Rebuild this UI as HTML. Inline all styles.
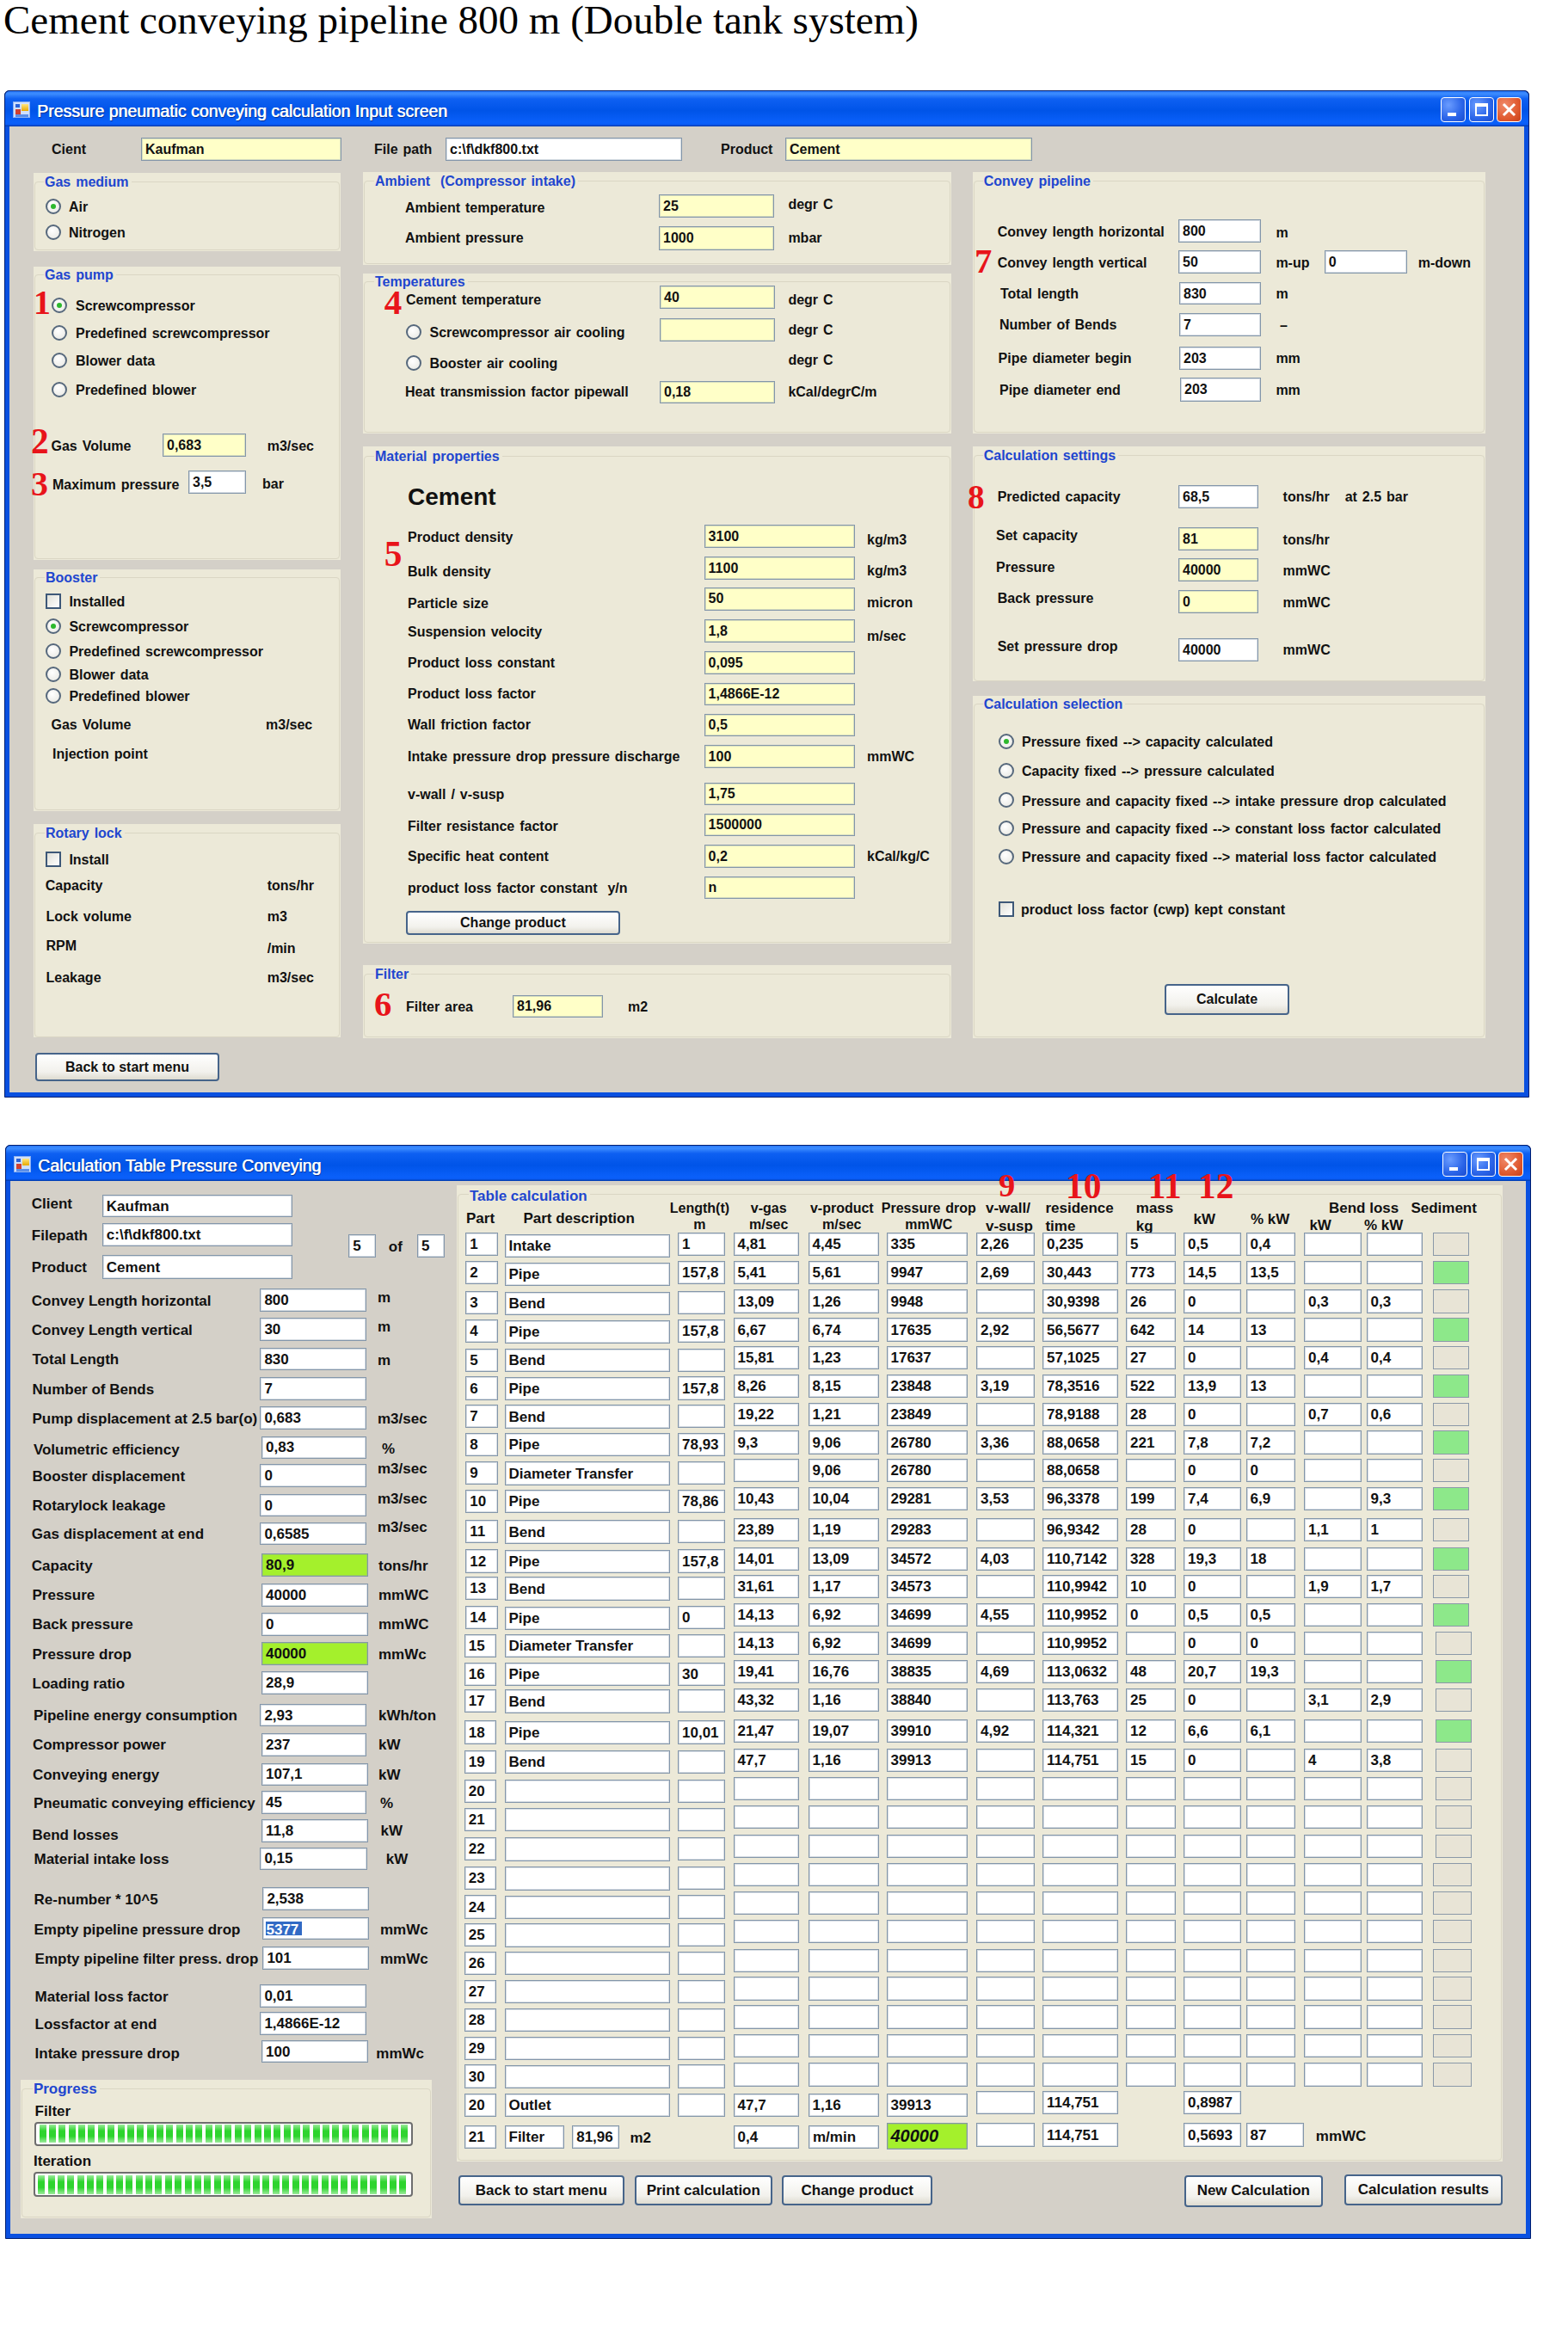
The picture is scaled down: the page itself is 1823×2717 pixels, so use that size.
<!DOCTYPE html><html><head><meta charset="utf-8"><style>
*{margin:0;padding:0;box-sizing:border-box}
html,body{width:1823px;height:2717px;background:#fff;overflow:hidden;position:relative}
body{font-family:"Liberation Sans",sans-serif}
.l{position:absolute;font-weight:bold;font-size:16px;line-height:20px;white-space:pre;color:#111;word-spacing:1.5px}
.t{position:absolute;border:1px solid #8396AA;box-shadow:inset 0 0 0 1px rgba(140,158,176,0.35)}
.t span{position:absolute;left:4px;font-weight:bold;font-size:16px;line-height:20px;white-space:nowrap;color:#111}
.g{position:absolute;background:#ECE9D8}
.gb{position:absolute;border:1px solid #DAD6C4;border-radius:4px}
.r{position:absolute;width:18px;height:18px;border-radius:50%;border:2px solid #56687C;background:radial-gradient(circle at 40% 35%,#fff,#e6e6e0)}
.r i{position:absolute;left:4px;top:4px;width:6px;height:6px;border-radius:50%;background:#2DB82D}
.c{position:absolute;border:2px solid #3D5878;background:linear-gradient(135deg,#e0e0d8,#fff)}
.b{position:absolute;border:2px solid #46648A;border-radius:4px;background:linear-gradient(#fff,#f2f1ec 70%,#dedbd0);font-weight:bold;font-size:16px;text-align:center;white-space:nowrap;color:#111}
.n{position:absolute;font-family:"Liberation Serif",serif;font-weight:bold;color:#E8141A;white-space:nowrap}
.w{position:absolute;background:#0A50E0;border:1px solid #001E70;border-radius:6px 6px 0 0}
.tbar{position:absolute;border-radius:6px 6px 0 0;border:1px solid #001E70;border-bottom:none;background:linear-gradient(#2A78F8 0,#3D8DFF 3px,#0E60F2 9px,#0054E8 55%,#0A60FA 88%,#0A5CF5 94%,#0038A8 100%)}
.cont{position:absolute;background:#D4D0C8}
.ico{position:absolute;width:20px;height:19px;border:1px solid #8cb0f0;background:#cfe0ff}
.ico b,.wb b{position:absolute;display:block}
.ttl{position:absolute;font-weight:normal;font-size:19.5px;line-height:24px;color:#fff;white-space:nowrap;text-shadow:0.6px 0 0 #fff,1px 1px 1px #0a2a80}
.wb{position:absolute;width:29px;height:29px;border:1px solid #fff;border-radius:4px;background:radial-gradient(circle at 30% 30%,#6a9cff,#2a64e8 60%,#1a4cd0)}
.wb.cl{background:radial-gradient(circle at 30% 30%,#f08a6a,#e05a30 60%,#c8401a)}
.pb{position:absolute;border:2px solid #6E6E6E;border-radius:4px;background:#fff}
.pbi{position:absolute}
.pbi b{position:absolute;top:3.5px;bottom:3.5px;width:8px;background:linear-gradient(#9CEB9C,#2ED42E 35%,#2ED42E 65%,#9CEB9C)}
.title{position:absolute;font-family:"Liberation Serif",serif;font-size:47px;line-height:54px;white-space:nowrap;color:#000}
</style></head><body><div class="title" style="left:4px;top:-4px">Cement conveying pipeline 800 m (Double tank system)</div>
<div class="w" style="left:5px;top:105px;width:1773px;height:1171px"></div>
<div class="tbar" style="left:5px;top:105px;width:1773px;height:42px"></div>
<div class="cont" style="left:11px;top:147px;width:1761px;height:1123px"></div>
<div class="ico" style="left:15px;top:118px"><b style="left:2px;top:2px;width:5px;height:4px;background:#2a62d8"></b><b style="left:9px;top:2px;width:8px;height:8px;background:linear-gradient(#ffe680,#e8a800)"></b><b style="left:2px;top:8px;width:6px;height:6px;background:#d04030"></b><b style="left:2px;top:14px;width:15px;height:3px;background:#5a8ee8"></b></div>
<div class="ttl" style="left:43px;top:117.0px">Pressure pneumatic conveying calculation Input screen</div>
<div class="wb" style="left:1675px;top:113px"><b style="left:7px;top:17px;width:10px;height:4px;background:#fff"></b></div>
<div class="wb" style="left:1708px;top:113px"><b style="left:6px;top:6px;width:13px;height:12px;border:2px solid #fff;border-top-width:4px;box-sizing:border-box;width:15px;height:15px"></b></div>
<div class="wb cl" style="left:1740px;top:113px"><svg width="27" height="27" style="position:absolute;left:0;top:0"><path d="M8 8L19 19M19 8L8 19" stroke="#fff" stroke-width="3" stroke-linecap="square"/></svg></div>
<div class="l" style="left:60.0px;top:164.1px;">Cient</div>
<div class="t" style="left:164.0px;top:160.0px;width:233.0px;height:27.0px;background:#FFFFC8;"><span style="top:2.8px;">Kaufman</span></div>
<div class="l" style="left:435.0px;top:164.1px;">File path</div>
<div class="t" style="left:518.0px;top:160.0px;width:275.0px;height:27.0px;background:#fff;"><span style="top:2.8px;">c:\f\dkf800.txt</span></div>
<div class="l" style="left:838.0px;top:164.1px;">Product</div>
<div class="t" style="left:913.0px;top:160.0px;width:287.0px;height:27.0px;background:#FFFFC8;"><span style="top:2.8px;">Cement</span></div>
<div class="g" style="left:39.0px;top:201.0px;width:357.0px;height:91.0px"></div>
<div class="gb" style="left:40.0px;top:211.0px;width:355.0px;height:80.0px"></div>
<div class="l" style="left:51.0px;top:202.1px;color:#2146CF;background:#ECE9D8;padding:0 3px 0 1px;">Gas medium</div>
<div class="r" style="left:53.0px;top:230.5px"><i></i></div>
<div class="l" style="left:80.0px;top:230.6px;">Air</div>
<div class="r" style="left:53.0px;top:260.7px"></div>
<div class="l" style="left:80.0px;top:260.8px;">Nitrogen</div>
<div class="g" style="left:39.0px;top:310.0px;width:357.0px;height:341.0px"></div>
<div class="gb" style="left:40.0px;top:319.0px;width:355.0px;height:331.0px"></div>
<div class="l" style="left:51.0px;top:310.1px;color:#2146CF;background:#ECE9D8;padding:0 3px 0 1px;">Gas pump</div>
<div class="n" style="left:39.0px;top:332.4px;font-size:39.9px;line-height:39.9px">1</div>
<div class="r" style="left:60.0px;top:345.7px"><i></i></div>
<div class="l" style="left:88.0px;top:345.8px;">Screwcompressor</div>
<div class="r" style="left:60.0px;top:378.0px"></div>
<div class="l" style="left:88.0px;top:378.1px;">Predefined screwcompressor</div>
<div class="r" style="left:60.0px;top:410.0px"></div>
<div class="l" style="left:88.0px;top:410.1px;">Blower data</div>
<div class="r" style="left:60.0px;top:444.0px"></div>
<div class="l" style="left:88.0px;top:444.1px;">Predefined blower</div>
<div class="n" style="left:36.0px;top:493.2px;font-size:41.4px;line-height:41.4px">2</div>
<div class="l" style="left:59.5px;top:508.6px;">Gas Volume</div>
<div class="t" style="left:189.0px;top:504.0px;width:97.0px;height:27.0px;background:#FFFFC8;"><span style="top:2.8px;">0,683</span></div>
<div class="l" style="left:310.7px;top:508.6px;">m3/sec</div>
<div class="n" style="left:36.0px;top:543.4px;font-size:39.9px;line-height:39.9px">3</div>
<div class="l" style="left:61.0px;top:554.1px;">Maximum pressure</div>
<div class="t" style="left:219.0px;top:547.0px;width:67.0px;height:27.0px;background:#fff;"><span style="top:2.8px;">3,5</span></div>
<div class="l" style="left:305.0px;top:553.1px;">bar</div>
<div class="g" style="left:39.0px;top:661.6px;width:357.0px;height:281.4px"></div>
<div class="gb" style="left:40.0px;top:671.0px;width:355.0px;height:271.0px"></div>
<div class="l" style="left:52.0px;top:662.1px;color:#2146CF;background:#ECE9D8;padding:0 3px 0 1px;">Booster</div>
<div class="c" style="left:53.0px;top:690.0px;width:18px;height:18px"></div>
<div class="l" style="left:80.4px;top:690.1px;">Installed</div>
<div class="r" style="left:53.0px;top:719.0px"><i></i></div>
<div class="l" style="left:80.4px;top:719.1px;">Screwcompressor</div>
<div class="r" style="left:53.0px;top:748.0px"></div>
<div class="l" style="left:80.4px;top:748.1px;">Predefined screwcompressor</div>
<div class="r" style="left:53.0px;top:775.0px"></div>
<div class="l" style="left:80.4px;top:775.1px;">Blower data</div>
<div class="r" style="left:53.0px;top:800.0px"></div>
<div class="l" style="left:80.4px;top:800.1px;">Predefined blower</div>
<div class="l" style="left:59.5px;top:833.1px;">Gas Volume</div>
<div class="l" style="left:309.0px;top:833.1px;">m3/sec</div>
<div class="l" style="left:61.0px;top:866.5px;">Injection point</div>
<div class="g" style="left:39.0px;top:957.6px;width:357.0px;height:248.9px"></div>
<div class="gb" style="left:40.0px;top:967.5px;width:355.0px;height:238.0px"></div>
<div class="l" style="left:52.0px;top:958.6px;color:#2146CF;background:#ECE9D8;padding:0 3px 0 1px;">Rotary lock</div>
<div class="c" style="left:53.0px;top:990.0px;width:18px;height:18px"></div>
<div class="l" style="left:80.4px;top:990.1px;">Install</div>
<div class="l" style="left:52.8px;top:1020.1px;">Capacity</div>
<div class="l" style="left:310.7px;top:1020.1px;">tons/hr</div>
<div class="l" style="left:53.5px;top:1056.1px;">Lock volume</div>
<div class="l" style="left:310.7px;top:1056.1px;">m3</div>
<div class="l" style="left:53.5px;top:1089.6px;">RPM</div>
<div class="l" style="left:310.7px;top:1093.1px;">/min</div>
<div class="l" style="left:53.5px;top:1126.6px;">Leakage</div>
<div class="l" style="left:310.7px;top:1126.6px;">m3/sec</div>
<div class="b" style="left:40.7px;top:1224.0px;width:214.6px;height:33.4px;line-height:29.4px;">Back to start menu</div>
<div class="g" style="left:421.5px;top:199.6px;width:684.1px;height:108.8px"></div>
<div class="gb" style="left:422.5px;top:209.7px;width:682.1px;height:97.7px"></div>
<div class="l" style="left:435.0px;top:200.8px;color:#2146CF;background:#ECE9D8;padding:0 3px 0 1px;">Ambient  (Compressor intake)</div>
<div class="l" style="left:471.0px;top:231.5px;">Ambient temperature</div>
<div class="t" style="left:766.0px;top:225.8px;width:134.0px;height:27.5px;background:#FFFFC8;"><span style="top:3.1px;">25</span></div>
<div class="l" style="left:916.4px;top:228.1px;">degr C</div>
<div class="l" style="left:471.0px;top:267.4px;">Ambient pressure</div>
<div class="t" style="left:766.0px;top:263.4px;width:134.0px;height:27.6px;background:#FFFFC8;"><span style="top:3.1px;">1000</span></div>
<div class="l" style="left:916.4px;top:267.1px;">mbar</div>
<div class="g" style="left:421.5px;top:317.6px;width:684.1px;height:186.9px"></div>
<div class="gb" style="left:422.5px;top:326.8px;width:682.1px;height:176.7px"></div>
<div class="l" style="left:435.0px;top:317.9px;color:#2146CF;background:#ECE9D8;padding:0 3px 0 1px;">Temperatures</div>
<div class="n" style="left:446.7px;top:331.2px;font-size:41.1px;line-height:41.1px">4</div>
<div class="l" style="left:472.0px;top:339.4px;">Cement temperature</div>
<div class="t" style="left:767.0px;top:332.3px;width:134.0px;height:26.7px;background:#FFFFC8;"><span style="top:2.6px;">40</span></div>
<div class="l" style="left:916.4px;top:339.1px;">degr C</div>
<div class="r" style="left:472.0px;top:376.5px"></div>
<div class="l" style="left:499.5px;top:376.6px;">Screwcompressor air cooling</div>
<div class="t" style="left:767.0px;top:369.5px;width:134.0px;height:27.0px;background:#FFFFC8;"></div>
<div class="l" style="left:916.4px;top:374.1px;">degr C</div>
<div class="r" style="left:472.0px;top:412.8px"></div>
<div class="l" style="left:499.5px;top:412.9px;">Booster air cooling</div>
<div class="l" style="left:916.4px;top:408.8px;">degr C</div>
<div class="l" style="left:471.0px;top:446.4px;">Heat transmission factor pipewall</div>
<div class="t" style="left:767.0px;top:442.5px;width:134.0px;height:26.5px;background:#FFFFC8;"><span style="top:2.6px;">0,18</span></div>
<div class="l" style="left:916.4px;top:446.4px;">kCal/degrC/m</div>
<div class="g" style="left:421.5px;top:519.0px;width:684.1px;height:578.0px"></div>
<div class="gb" style="left:422.5px;top:530.0px;width:682.1px;height:566.0px"></div>
<div class="l" style="left:435.0px;top:521.1px;color:#2146CF;background:#ECE9D8;padding:0 3px 0 1px;">Material properties</div>
<div class="l" style="left:474.0px;top:559.6px;font-size:28px;line-height:35.0px;">Cement</div>
<div class="n" style="left:446.7px;top:624.2px;font-size:41.4px;line-height:41.4px">5</div>
<div class="l" style="left:474.0px;top:615.1px;">Product density</div>
<div class="t" style="left:818.6px;top:610.0px;width:175.9px;height:26.8px;background:#FFFFC8;"><span style="top:2.7px;">3100</span></div>
<div class="l" style="left:1008.0px;top:618.1px;">kg/m3</div>
<div class="l" style="left:474.0px;top:655.1px;">Bulk density</div>
<div class="t" style="left:818.6px;top:647.0px;width:175.9px;height:26.5px;background:#FFFFC8;"><span style="top:2.6px;">1100</span></div>
<div class="l" style="left:1008.0px;top:654.1px;">kg/m3</div>
<div class="l" style="left:474.0px;top:691.7px;">Particle size</div>
<div class="t" style="left:818.6px;top:682.7px;width:175.9px;height:27.1px;background:#FFFFC8;"><span style="top:2.8px;">50</span></div>
<div class="l" style="left:1008.0px;top:691.1px;">micron</div>
<div class="l" style="left:474.0px;top:725.1px;">Suspension velocity</div>
<div class="t" style="left:818.6px;top:720.4px;width:175.9px;height:26.6px;background:#FFFFC8;"><span style="top:2.6px;">1,8</span></div>
<div class="l" style="left:1008.0px;top:729.8px;">m/sec</div>
<div class="l" style="left:474.0px;top:761.1px;">Product loss constant</div>
<div class="t" style="left:818.6px;top:757.0px;width:175.9px;height:26.7px;background:#FFFFC8;"><span style="top:2.7px;">0,095</span></div>
<div class="l" style="left:474.0px;top:797.1px;">Product loss factor</div>
<div class="t" style="left:818.6px;top:793.8px;width:175.9px;height:26.7px;background:#FFFFC8;"><span style="top:2.7px;">1,4866E-12</span></div>
<div class="l" style="left:474.0px;top:833.1px;">Wall friction factor</div>
<div class="t" style="left:818.6px;top:829.7px;width:175.9px;height:26.8px;background:#FFFFC8;"><span style="top:2.7px;">0,5</span></div>
<div class="l" style="left:474.0px;top:870.1px;">Intake pressure drop pressure discharge</div>
<div class="t" style="left:818.6px;top:866.0px;width:175.9px;height:26.8px;background:#FFFFC8;"><span style="top:2.7px;">100</span></div>
<div class="l" style="left:1008.0px;top:870.1px;">mmWC</div>
<div class="l" style="left:474.0px;top:913.7px;">v-wall / v-susp</div>
<div class="t" style="left:818.6px;top:909.8px;width:175.9px;height:26.6px;background:#FFFFC8;"><span style="top:2.6px;">1,75</span></div>
<div class="l" style="left:474.0px;top:950.5px;">Filter resistance factor</div>
<div class="t" style="left:818.6px;top:945.6px;width:175.9px;height:26.4px;background:#FFFFC8;"><span style="top:2.5px;">1500000</span></div>
<div class="l" style="left:474.0px;top:986.1px;">Specific heat content</div>
<div class="t" style="left:818.6px;top:982.0px;width:175.9px;height:27.0px;background:#FFFFC8;"><span style="top:2.8px;">0,2</span></div>
<div class="l" style="left:1008.0px;top:986.1px;">kCal/kg/C</div>
<div class="l" style="left:474.0px;top:1022.6px;">product loss factor constant  y/n</div>
<div class="t" style="left:818.6px;top:1019.0px;width:175.9px;height:26.0px;background:#FFFFC8;"><span style="top:2.3px;">n</span></div>
<div class="b" style="left:472.0px;top:1059.0px;width:248.8px;height:28.0px;line-height:24.0px;">Change product</div>
<div class="g" style="left:421.5px;top:1122.4px;width:684.1px;height:84.6px"></div>
<div class="gb" style="left:422.5px;top:1131.5px;width:682.1px;height:74.5px"></div>
<div class="l" style="left:435.0px;top:1122.6px;color:#2146CF;background:#ECE9D8;padding:0 3px 0 1px;">Filter</div>
<div class="n" style="left:435.0px;top:1147.8px;font-size:40.7px;line-height:40.7px">6</div>
<div class="l" style="left:472.0px;top:1160.8px;">Filter area</div>
<div class="t" style="left:596.0px;top:1156.8px;width:104.6px;height:26.2px;background:#FFFFC8;"><span style="top:2.4px;">81,96</span></div>
<div class="l" style="left:730.0px;top:1160.8px;">m2</div>
<div class="g" style="left:1131.0px;top:199.6px;width:595.7px;height:304.9px"></div>
<div class="gb" style="left:1132.0px;top:209.7px;width:593.7px;height:293.8px"></div>
<div class="l" style="left:1142.7px;top:200.8px;color:#2146CF;background:#ECE9D8;padding:0 3px 0 1px;">Convey pipeline</div>
<div class="l" style="left:1159.7px;top:259.6px;">Convey length horizontal</div>
<div class="t" style="left:1370.0px;top:254.7px;width:95.5px;height:27.1px;background:#fff;"><span style="top:2.9px;">800</span></div>
<div class="l" style="left:1483.4px;top:261.1px;">m</div>
<div class="n" style="left:1133.0px;top:284.3px;font-size:40.7px;line-height:40.7px">7</div>
<div class="l" style="left:1159.7px;top:295.8px;">Convey length vertical</div>
<div class="t" style="left:1370.0px;top:291.4px;width:95.5px;height:27.1px;background:#fff;"><span style="top:2.9px;">50</span></div>
<div class="l" style="left:1483.4px;top:295.8px;">m-up</div>
<div class="t" style="left:1539.8px;top:291.4px;width:96.0px;height:27.1px;background:#fff;"><span style="top:2.9px;">0</span></div>
<div class="l" style="left:1648.7px;top:295.8px;">m-down</div>
<div class="l" style="left:1163.0px;top:331.6px;">Total length</div>
<div class="t" style="left:1371.0px;top:328.0px;width:95.0px;height:26.3px;background:#fff;"><span style="top:2.5px;">830</span></div>
<div class="l" style="left:1483.4px;top:332.1px;">m</div>
<div class="l" style="left:1162.0px;top:368.4px;">Number of Bends</div>
<div class="t" style="left:1371.0px;top:364.4px;width:95.0px;height:26.6px;background:#fff;"><span style="top:2.6px;">7</span></div>
<div class="l" style="left:1488.0px;top:369.1px;">–</div>
<div class="l" style="left:1160.6px;top:407.4px;">Pipe diameter begin</div>
<div class="t" style="left:1371.0px;top:403.4px;width:95.0px;height:26.6px;background:#fff;"><span style="top:2.6px;">203</span></div>
<div class="l" style="left:1483.4px;top:407.4px;">mm</div>
<div class="l" style="left:1162.0px;top:444.1px;">Pipe diameter end</div>
<div class="t" style="left:1372.0px;top:439.0px;width:94.0px;height:27.8px;background:#fff;"><span style="top:3.2px;">203</span></div>
<div class="l" style="left:1483.4px;top:444.1px;">mm</div>
<div class="g" style="left:1131.0px;top:519.3px;width:595.7px;height:273.2px"></div>
<div class="gb" style="left:1132.0px;top:528.5px;width:593.7px;height:263.0px"></div>
<div class="l" style="left:1142.7px;top:519.6px;color:#2146CF;background:#ECE9D8;padding:0 3px 0 1px;">Calculation settings</div>
<div class="n" style="left:1125.0px;top:557.5px;font-size:39.2px;line-height:39.2px">8</div>
<div class="l" style="left:1159.7px;top:568.1px;">Predicted capacity</div>
<div class="t" style="left:1370.0px;top:564.3px;width:92.7px;height:26.7px;background:#fff;"><span style="top:2.7px;">68,5</span></div>
<div class="l" style="left:1491.6px;top:568.1px;white-space:pre">tons/hr   at 2.5 bar</div>
<div class="l" style="left:1158.0px;top:612.8px;">Set capacity</div>
<div class="t" style="left:1370.0px;top:613.4px;width:92.7px;height:26.6px;background:#FFFFC8;"><span style="top:2.6px;">81</span></div>
<div class="l" style="left:1491.6px;top:618.1px;">tons/hr</div>
<div class="l" style="left:1158.0px;top:649.5px;">Pressure</div>
<div class="t" style="left:1370.0px;top:649.2px;width:92.7px;height:26.6px;background:#FFFFC8;"><span style="top:2.6px;">40000</span></div>
<div class="l" style="left:1491.6px;top:654.1px;">mmWC</div>
<div class="l" style="left:1159.7px;top:686.1px;">Back pressure</div>
<div class="t" style="left:1370.0px;top:686.0px;width:92.7px;height:26.6px;background:#FFFFC8;"><span style="top:2.6px;">0</span></div>
<div class="l" style="left:1491.6px;top:690.8px;">mmWC</div>
<div class="l" style="left:1159.7px;top:742.1px;">Set pressure drop</div>
<div class="t" style="left:1370.0px;top:742.0px;width:92.7px;height:26.6px;background:#fff;"><span style="top:2.6px;">40000</span></div>
<div class="l" style="left:1491.6px;top:745.9px;">mmWC</div>
<div class="g" style="left:1131.0px;top:808.5px;width:595.7px;height:398.5px"></div>
<div class="gb" style="left:1132.0px;top:817.7px;width:593.7px;height:388.3px"></div>
<div class="l" style="left:1142.7px;top:808.8px;color:#2146CF;background:#ECE9D8;padding:0 3px 0 1px;">Calculation selection</div>
<div class="r" style="left:1161.0px;top:853.0px"><i></i></div>
<div class="l" style="left:1188.0px;top:853.1px;">Pressure fixed --&gt; capacity calculated</div>
<div class="r" style="left:1161.0px;top:887.0px"></div>
<div class="l" style="left:1188.0px;top:887.1px;">Capacity fixed --&gt; pressure calculated</div>
<div class="r" style="left:1161.0px;top:921.4px"></div>
<div class="l" style="left:1188.0px;top:921.5px;">Pressure and capacity fixed --&gt; intake pressure drop calculated</div>
<div class="r" style="left:1161.0px;top:953.6px"></div>
<div class="l" style="left:1188.0px;top:953.7px;">Pressure and capacity fixed --&gt; constant loss factor calculated</div>
<div class="r" style="left:1161.0px;top:987.0px"></div>
<div class="l" style="left:1188.0px;top:987.1px;">Pressure and capacity fixed --&gt; material loss factor calculated</div>
<div class="c" style="left:1161.0px;top:1047.5px;width:18px;height:18px"></div>
<div class="l" style="left:1187.0px;top:1047.8px;">product loss factor (cwp) kept constant</div>
<div class="b" style="left:1354.0px;top:1144.0px;width:145.0px;height:36.0px;line-height:32.0px;">Calculate</div>
<div class="w" style="left:6px;top:1331px;width:1774px;height:1272px"></div>
<div class="tbar" style="left:6px;top:1331px;width:1774px;height:42px"></div>
<div class="cont" style="left:12px;top:1373px;width:1762px;height:1224px"></div>
<div class="ico" style="left:16px;top:1344px"><b style="left:2px;top:2px;width:5px;height:4px;background:#2a62d8"></b><b style="left:9px;top:2px;width:8px;height:8px;background:linear-gradient(#ffe680,#e8a800)"></b><b style="left:2px;top:8px;width:6px;height:6px;background:#d04030"></b><b style="left:2px;top:14px;width:15px;height:3px;background:#5a8ee8"></b></div>
<div class="ttl" style="left:44px;top:1343.0px">Calculation Table Pressure Conveying</div>
<div class="wb" style="left:1677px;top:1339px"><b style="left:7px;top:17px;width:10px;height:4px;background:#fff"></b></div>
<div class="wb" style="left:1710px;top:1339px"><b style="left:6px;top:6px;width:13px;height:12px;border:2px solid #fff;border-top-width:4px;box-sizing:border-box;width:15px;height:15px"></b></div>
<div class="wb cl" style="left:1742px;top:1339px"><svg width="27" height="27" style="position:absolute;left:0;top:0"><path d="M8 8L19 19M19 8L8 19" stroke="#fff" stroke-width="3" stroke-linecap="square"/></svg></div>
<div class="l" style="left:36.8px;top:1389.3px;font-size:17px;line-height:21.2px;word-spacing:0;">Client</div>
<div class="t" style="left:118.8px;top:1388.5px;width:221.2px;height:26.9px;background:#fff;"><span style="top:2.1px;font-size:17px;line-height:21.2px;">Kaufman</span></div>
<div class="l" style="left:36.8px;top:1425.8px;font-size:17px;line-height:21.2px;word-spacing:0;">Filepath</div>
<div class="t" style="left:118.8px;top:1422.0px;width:221.2px;height:27.0px;background:#fff;"><span style="top:2.2px;font-size:17px;line-height:21.2px;">c:\f\dkf800.txt</span></div>
<div class="l" style="left:36.8px;top:1462.5px;font-size:17px;line-height:21.2px;word-spacing:0;">Product</div>
<div class="t" style="left:118.8px;top:1459.4px;width:221.2px;height:27.6px;background:#fff;"><span style="top:2.5px;font-size:17px;line-height:21.2px;">Cement</span></div>
<div class="t" style="left:405.3px;top:1435.3px;width:32.0px;height:26.5px;background:#fff;"><span style="top:1.9px;font-size:17px;line-height:21.2px;">5</span></div>
<div class="l" style="left:451.8px;top:1439.0px;font-size:17px;line-height:21.2px;word-spacing:0;">of</div>
<div class="t" style="left:484.9px;top:1435.3px;width:32.3px;height:26.5px;background:#fff;"><span style="top:1.9px;font-size:17px;line-height:21.2px;">5</span></div>
<div class="l" style="left:36.8px;top:1501.5px;font-size:17px;line-height:21.2px;word-spacing:0;">Convey Length horizontal</div>
<div class="t" style="left:302.4px;top:1498.0px;width:123.6px;height:26.9px;background:#fff;"><span style="top:2.1px;font-size:17px;line-height:21.2px;">800</span></div>
<div class="l" style="left:439.0px;top:1498.1px;font-size:17px;line-height:21.2px;word-spacing:0;">m</div>
<div class="l" style="left:36.8px;top:1536.0px;font-size:17px;line-height:21.2px;word-spacing:0;">Convey Length vertical</div>
<div class="t" style="left:302.4px;top:1532.4px;width:123.6px;height:26.6px;background:#fff;"><span style="top:2.0px;font-size:17px;line-height:21.2px;">30</span></div>
<div class="l" style="left:439.0px;top:1531.5px;font-size:17px;line-height:21.2px;word-spacing:0;">m</div>
<div class="l" style="left:37.5px;top:1570.1px;font-size:17px;line-height:21.2px;word-spacing:0;">Total Length</div>
<div class="t" style="left:302.4px;top:1567.0px;width:123.6px;height:26.4px;background:#fff;"><span style="top:1.9px;font-size:17px;line-height:21.2px;">830</span></div>
<div class="l" style="left:439.0px;top:1571.1px;font-size:17px;line-height:21.2px;word-spacing:0;">m</div>
<div class="l" style="left:37.5px;top:1604.5px;font-size:17px;line-height:21.2px;word-spacing:0;">Number of Bends</div>
<div class="t" style="left:302.4px;top:1600.6px;width:123.6px;height:27.2px;background:#fff;"><span style="top:2.3px;font-size:17px;line-height:21.2px;">7</span></div>
<div class="l" style="left:37.5px;top:1638.8px;font-size:17px;line-height:21.2px;word-spacing:0;">Pump displacement at 2.5 bar(o)</div>
<div class="t" style="left:302.4px;top:1635.0px;width:123.6px;height:27.0px;background:#fff;"><span style="top:2.2px;font-size:17px;line-height:21.2px;">0,683</span></div>
<div class="l" style="left:439.0px;top:1638.8px;font-size:17px;line-height:21.2px;word-spacing:0;">m3/sec</div>
<div class="l" style="left:38.9px;top:1674.5px;font-size:17px;line-height:21.2px;word-spacing:0;">Volumetric efficiency</div>
<div class="t" style="left:304.0px;top:1669.6px;width:122.0px;height:26.4px;background:#fff;"><span style="top:1.9px;font-size:17px;line-height:21.2px;">0,83</span></div>
<div class="l" style="left:444.0px;top:1673.5px;font-size:17px;line-height:21.2px;word-spacing:0;">%</div>
<div class="l" style="left:37.5px;top:1705.5px;font-size:17px;line-height:21.2px;word-spacing:0;">Booster displacement</div>
<div class="t" style="left:302.4px;top:1702.3px;width:123.6px;height:26.7px;background:#fff;"><span style="top:2.0px;font-size:17px;line-height:21.2px;">0</span></div>
<div class="l" style="left:439.0px;top:1697.3px;font-size:17px;line-height:21.2px;word-spacing:0;">m3/sec</div>
<div class="l" style="left:37.5px;top:1740.0px;font-size:17px;line-height:21.2px;word-spacing:0;">Rotarylock leakage</div>
<div class="t" style="left:302.4px;top:1736.7px;width:123.6px;height:26.6px;background:#fff;"><span style="top:2.0px;font-size:17px;line-height:21.2px;">0</span></div>
<div class="l" style="left:439.0px;top:1731.5px;font-size:17px;line-height:21.2px;word-spacing:0;">m3/sec</div>
<div class="l" style="left:36.8px;top:1773.0px;font-size:17px;line-height:21.2px;word-spacing:0;">Gas displacement at end</div>
<div class="t" style="left:302.4px;top:1769.5px;width:123.6px;height:26.8px;background:#fff;"><span style="top:2.1px;font-size:17px;line-height:21.2px;">0,6585</span></div>
<div class="l" style="left:439.0px;top:1764.5px;font-size:17px;line-height:21.2px;word-spacing:0;">m3/sec</div>
<div class="l" style="left:36.8px;top:1809.9px;font-size:17px;line-height:21.2px;word-spacing:0;">Capacity</div>
<div class="t" style="left:304.0px;top:1806.3px;width:123.7px;height:26.7px;background:#A4F02C;"><span style="top:2.0px;font-size:17px;line-height:21.2px;">80,9</span></div>
<div class="l" style="left:440.0px;top:1809.9px;font-size:17px;line-height:21.2px;word-spacing:0;">tons/hr</div>
<div class="l" style="left:37.5px;top:1844.3px;font-size:17px;line-height:21.2px;word-spacing:0;">Pressure</div>
<div class="t" style="left:304.0px;top:1840.7px;width:123.7px;height:26.9px;background:#fff;"><span style="top:2.1px;font-size:17px;line-height:21.2px;">40000</span></div>
<div class="l" style="left:440.0px;top:1844.3px;font-size:17px;line-height:21.2px;word-spacing:0;">mmWC</div>
<div class="l" style="left:37.5px;top:1878.1px;font-size:17px;line-height:21.2px;word-spacing:0;">Back pressure</div>
<div class="t" style="left:304.0px;top:1875.0px;width:123.7px;height:27.0px;background:#fff;"><span style="top:2.2px;font-size:17px;line-height:21.2px;">0</span></div>
<div class="l" style="left:440.0px;top:1878.1px;font-size:17px;line-height:21.2px;word-spacing:0;">mmWC</div>
<div class="l" style="left:37.5px;top:1912.5px;font-size:17px;line-height:21.2px;word-spacing:0;">Pressure drop</div>
<div class="t" style="left:304.0px;top:1909.0px;width:123.7px;height:26.8px;background:#A4F02C;"><span style="top:2.1px;font-size:17px;line-height:21.2px;">40000</span></div>
<div class="l" style="left:440.0px;top:1912.5px;font-size:17px;line-height:21.2px;word-spacing:0;">mmWc</div>
<div class="l" style="left:37.5px;top:1946.5px;font-size:17px;line-height:21.2px;word-spacing:0;">Loading ratio</div>
<div class="t" style="left:304.0px;top:1943.4px;width:123.7px;height:26.6px;background:#fff;"><span style="top:2.0px;font-size:17px;line-height:21.2px;">28,9</span></div>
<div class="l" style="left:38.9px;top:1984.2px;font-size:17px;line-height:21.2px;word-spacing:0;">Pipeline energy consumption</div>
<div class="t" style="left:302.4px;top:1980.7px;width:123.6px;height:26.8px;background:#fff;"><span style="top:2.1px;font-size:17px;line-height:21.2px;">2,93</span></div>
<div class="l" style="left:440.0px;top:1984.2px;font-size:17px;line-height:21.2px;word-spacing:0;">kWh/ton</div>
<div class="l" style="left:37.9px;top:2018.3px;font-size:17px;line-height:21.2px;word-spacing:0;">Compressor power</div>
<div class="t" style="left:304.0px;top:2015.0px;width:122.0px;height:27.0px;background:#fff;"><span style="top:2.2px;font-size:17px;line-height:21.2px;">237</span></div>
<div class="l" style="left:440.0px;top:2018.3px;font-size:17px;line-height:21.2px;word-spacing:0;">kW</div>
<div class="l" style="left:37.9px;top:2053.1px;font-size:17px;line-height:21.2px;word-spacing:0;">Conveying energy</div>
<div class="t" style="left:304.0px;top:2049.5px;width:123.7px;height:26.5px;background:#fff;"><span style="top:1.9px;font-size:17px;line-height:21.2px;">107,1</span></div>
<div class="l" style="left:440.0px;top:2053.1px;font-size:17px;line-height:21.2px;word-spacing:0;">kW</div>
<div class="l" style="left:38.9px;top:2085.5px;font-size:17px;line-height:21.2px;word-spacing:0;">Pneumatic conveying efficiency</div>
<div class="t" style="left:304.0px;top:2082.0px;width:122.0px;height:26.8px;background:#fff;"><span style="top:2.1px;font-size:17px;line-height:21.2px;">45</span></div>
<div class="l" style="left:442.0px;top:2085.5px;font-size:17px;line-height:21.2px;word-spacing:0;">%</div>
<div class="l" style="left:37.5px;top:2122.5px;font-size:17px;line-height:21.2px;word-spacing:0;">Bend losses</div>
<div class="t" style="left:304.0px;top:2115.0px;width:123.7px;height:26.5px;background:#fff;"><span style="top:1.9px;font-size:17px;line-height:21.2px;">11,8</span></div>
<div class="l" style="left:442.5px;top:2118.2px;font-size:17px;line-height:21.2px;word-spacing:0;">kW</div>
<div class="l" style="left:39.5px;top:2151.3px;font-size:17px;line-height:21.2px;word-spacing:0;">Material intake loss</div>
<div class="t" style="left:302.4px;top:2147.7px;width:124.6px;height:26.3px;background:#fff;"><span style="top:1.8px;font-size:17px;line-height:21.2px;">0,15</span></div>
<div class="l" style="left:448.7px;top:2151.3px;font-size:17px;line-height:21.2px;word-spacing:0;">kW</div>
<div class="l" style="left:39.5px;top:2197.5px;font-size:17px;line-height:21.2px;word-spacing:0;">Re-number * 10^5</div>
<div class="t" style="left:305.4px;top:2194.0px;width:123.3px;height:27.0px;background:#fff;"><span style="top:2.2px;font-size:17px;line-height:21.2px;">2,538</span></div>
<div class="l" style="left:39.5px;top:2232.9px;font-size:17px;line-height:21.2px;word-spacing:0;">Empty pipeline pressure drop</div>
<div class="t" style="left:305.4px;top:2228.6px;width:123.3px;height:26.9px;background:#fff;"></div>
<div class="l" style="left:442.0px;top:2232.9px;font-size:17px;line-height:21.2px;word-spacing:0;">mmWc</div>
<div class="l" style="left:40.6px;top:2266.5px;font-size:17px;line-height:21.2px;word-spacing:0;">Empty pipeline filter press. drop</div>
<div class="t" style="left:305.4px;top:2263.0px;width:123.3px;height:27.0px;background:#fff;"><span style="top:2.2px;font-size:17px;line-height:21.2px;">101</span></div>
<div class="l" style="left:442.0px;top:2266.5px;font-size:17px;line-height:21.2px;word-spacing:0;">mmWc</div>
<div class="l" style="left:40.6px;top:2310.8px;font-size:17px;line-height:21.2px;word-spacing:0;">Material loss factor</div>
<div class="t" style="left:302.4px;top:2307.0px;width:123.6px;height:27.0px;background:#fff;"><span style="top:2.2px;font-size:17px;line-height:21.2px;">0,01</span></div>
<div class="l" style="left:40.6px;top:2342.5px;font-size:17px;line-height:21.2px;word-spacing:0;">Lossfactor at end</div>
<div class="t" style="left:302.4px;top:2339.0px;width:123.6px;height:26.8px;background:#fff;"><span style="top:2.1px;font-size:17px;line-height:21.2px;">1,4866E-12</span></div>
<div class="l" style="left:40.6px;top:2376.9px;font-size:17px;line-height:21.2px;word-spacing:0;">Intake pressure drop</div>
<div class="t" style="left:304.0px;top:2371.6px;width:123.7px;height:26.9px;background:#fff;"><span style="top:2.1px;font-size:17px;line-height:21.2px;">100</span></div>
<div class="l" style="left:437.3px;top:2376.9px;font-size:17px;line-height:21.2px;word-spacing:0;">mmWc</div>
<div style="position:absolute;left:309px;top:2233.8px;width:41.5px;height:16.5px;background:#316AC5"></div>
<div class="l" style="left:309.5px;top:2232.9px;font-size:17px;line-height:21.2px;word-spacing:0;color:#fff;">5377</div>
<div class="g" style="left:24.0px;top:2418.0px;width:478.0px;height:161.0px"></div>
<div class="gb" style="left:25.0px;top:2427.7px;width:476.0px;height:150.3px"></div>
<div class="l" style="left:37.9px;top:2418.2px;font-size:17px;line-height:21.2px;word-spacing:0;color:#2146CF;background:#ECE9D8;padding:0 3px 0 1px;">Progress</div>
<div class="l" style="left:40.6px;top:2443.5px;font-size:17px;line-height:21.2px;word-spacing:0;">Filter</div>
<div class="l" style="left:39.0px;top:2501.9px;font-size:17px;line-height:21.2px;word-spacing:0;">Iteration</div>
<div class="pb" style="left:40.3px;top:2466.5px;width:440.09999999999997px;height:28.0px"></div>
<div class="pbi" style="left:40.3px;top:2466.5px;width:440.09999999999997px;height:28.0px"><b style="left:5.4px"></b><b style="left:16.8px"></b><b style="left:28.1px"></b><b style="left:39.5px"></b><b style="left:50.8px"></b><b style="left:62.2px"></b><b style="left:73.6px"></b><b style="left:84.9px"></b><b style="left:96.3px"></b><b style="left:107.6px"></b><b style="left:119.0px"></b><b style="left:130.4px"></b><b style="left:141.7px"></b><b style="left:153.1px"></b><b style="left:164.4px"></b><b style="left:175.8px"></b><b style="left:187.2px"></b><b style="left:198.5px"></b><b style="left:209.9px"></b><b style="left:221.2px"></b><b style="left:232.6px"></b><b style="left:244.0px"></b><b style="left:255.3px"></b><b style="left:266.7px"></b><b style="left:278.0px"></b><b style="left:289.4px"></b><b style="left:300.8px"></b><b style="left:312.1px"></b><b style="left:323.5px"></b><b style="left:334.8px"></b><b style="left:346.2px"></b><b style="left:357.6px"></b><b style="left:368.9px"></b><b style="left:380.3px"></b><b style="left:391.6px"></b><b style="left:403.0px"></b><b style="left:414.4px"></b><b style="left:425.7px"></b></div>
<div class="pb" style="left:38.6px;top:2525.3px;width:441.79999999999995px;height:29.09999999999991px"></div>
<div class="pbi" style="left:38.6px;top:2525.3px;width:441.79999999999995px;height:29.09999999999991px"><b style="left:5.6px"></b><b style="left:17.0px"></b><b style="left:28.3px"></b><b style="left:39.7px"></b><b style="left:51.0px"></b><b style="left:62.4px"></b><b style="left:73.8px"></b><b style="left:85.1px"></b><b style="left:96.5px"></b><b style="left:107.8px"></b><b style="left:119.2px"></b><b style="left:130.6px"></b><b style="left:141.9px"></b><b style="left:153.3px"></b><b style="left:164.6px"></b><b style="left:176.0px"></b><b style="left:187.4px"></b><b style="left:198.7px"></b><b style="left:210.1px"></b><b style="left:221.4px"></b><b style="left:232.8px"></b><b style="left:244.2px"></b><b style="left:255.5px"></b><b style="left:266.9px"></b><b style="left:278.2px"></b><b style="left:289.6px"></b><b style="left:301.0px"></b><b style="left:312.3px"></b><b style="left:323.7px"></b><b style="left:335.0px"></b><b style="left:346.4px"></b><b style="left:357.8px"></b><b style="left:369.1px"></b><b style="left:380.5px"></b><b style="left:391.8px"></b><b style="left:403.2px"></b><b style="left:414.6px"></b><b style="left:425.9px"></b></div>
<div class="g" style="left:530.5px;top:1378.0px;width:1216.5px;height:1135.0px"></div>
<div class="gb" style="left:531.5px;top:1387.6px;width:1214.5px;height:1124.4px"></div>
<div class="l" style="left:545.0px;top:1379.5px;font-size:17px;line-height:21.2px;word-spacing:0;color:#2146CF;background:#ECE9D8;padding:0 3px 0 1px;">Table calculation</div>
<div class="l" style="left:542.0px;top:1405.5px;font-size:17px;line-height:21.2px;word-spacing:0;">Part</div>
<div class="l" style="left:608.4px;top:1405.5px;font-size:17px;line-height:21.2px;word-spacing:0;">Part description</div>
<div class="l" style="left:663.4px;width:300px;text-align:center;top:1395.3px">Length(t)</div>
<div class="l" style="left:663.4px;width:300px;text-align:center;top:1414.3px">m</div>
<div class="l" style="left:743.7px;width:300px;text-align:center;top:1395.3px">v-gas</div>
<div class="l" style="left:743.7px;width:300px;text-align:center;top:1414.3px">m/sec</div>
<div class="l" style="left:828.8px;width:300px;text-align:center;top:1395.3px">v-product</div>
<div class="l" style="left:828.8px;width:300px;text-align:center;top:1414.3px">m/sec</div>
<div class="l" style="left:929.8px;width:300px;text-align:center;top:1395.3px">Pressure drop</div>
<div class="l" style="left:929.8px;width:300px;text-align:center;top:1414.3px">mmWC</div>
<div class="l" style="left:1146.0px;top:1394.3px;font-size:17px;line-height:21.2px;word-spacing:0;">v-wall/</div>
<div class="l" style="left:1146.0px;top:1414.7px;font-size:17px;line-height:21.2px;word-spacing:0;">v-susp</div>
<div class="l" style="left:1215.4px;top:1394.3px;font-size:17px;line-height:21.2px;word-spacing:0;">residence</div>
<div class="l" style="left:1215.4px;top:1414.7px;font-size:17px;line-height:21.2px;word-spacing:0;">time</div>
<div class="l" style="left:1320.8px;top:1394.3px;font-size:17px;line-height:21.2px;word-spacing:0;">mass</div>
<div class="l" style="left:1320.8px;top:1414.7px;font-size:17px;line-height:21.2px;word-spacing:0;">kg</div>
<div class="l" style="left:1387.6px;top:1407.3px;font-size:17px;line-height:21.2px;word-spacing:0;">kW</div>
<div class="l" style="left:1454.0px;top:1407.3px;font-size:17px;line-height:21.2px;word-spacing:0;">% kW</div>
<div class="l" style="left:1545.0px;top:1394.3px;font-size:17px;line-height:21.2px;word-spacing:0;">Bend loss</div>
<div class="l" style="left:1522.4px;top:1413.7px;font-size:17px;line-height:21.2px;word-spacing:0;">kW</div>
<div class="l" style="left:1586.0px;top:1413.7px;font-size:17px;line-height:21.2px;word-spacing:0;">% kW</div>
<div class="l" style="left:1640.4px;top:1394.3px;font-size:17px;line-height:21.2px;word-spacing:0;">Sediment</div>
<div class="n" style="left:1161.0px;top:1358.7px;font-size:38.5px;line-height:38.5px">9</div>
<div class="n" style="left:1239.0px;top:1359.2px;font-size:41.4px;line-height:41.4px">10</div>
<div class="n" style="left:1334.7px;top:1359.2px;font-size:41.4px;line-height:41.4px">11</div>
<div class="n" style="left:1393.0px;top:1359.2px;font-size:41.4px;line-height:41.4px">12</div>
<div class="t" style="left:541.3px;top:1433.2px;width:37.5px;height:27.3px;background:#fff;"><span style="top:2.3px;font-size:17px;line-height:21.2px;">1</span></div>
<div class="t" style="left:586.5px;top:1434.7px;width:192.3px;height:27.3px;background:#fff;"><span style="top:2.3px;font-size:17px;line-height:21.2px;">Intake</span></div>
<div class="t" style="left:788.0px;top:1433.2px;width:54.8px;height:27.3px;background:#fff;"><span style="top:2.3px;font-size:17px;line-height:21.2px;">1</span></div>
<div class="t" style="left:852.5px;top:1433.2px;width:76.5px;height:27.3px;background:#fff;"><span style="top:2.3px;font-size:17px;line-height:21.2px;">4,81</span></div>
<div class="t" style="left:939.6px;top:1433.2px;width:82.1px;height:27.3px;background:#fff;"><span style="top:2.3px;font-size:17px;line-height:21.2px;">4,45</span></div>
<div class="t" style="left:1030.5px;top:1433.2px;width:94.5px;height:27.3px;background:#fff;"><span style="top:2.3px;font-size:17px;line-height:21.2px;">335</span></div>
<div class="t" style="left:1135.0px;top:1433.2px;width:67.7px;height:27.3px;background:#fff;"><span style="top:2.3px;font-size:17px;line-height:21.2px;">2,26</span></div>
<div class="t" style="left:1212.0px;top:1433.2px;width:87.5px;height:27.3px;background:#fff;"><span style="top:2.3px;font-size:17px;line-height:21.2px;">0,235</span></div>
<div class="t" style="left:1309.0px;top:1433.2px;width:57.5px;height:27.3px;background:#fff;"><span style="top:2.3px;font-size:17px;line-height:21.2px;">5</span></div>
<div class="t" style="left:1376.0px;top:1433.2px;width:66.5px;height:27.3px;background:#fff;"><span style="top:2.3px;font-size:17px;line-height:21.2px;">0,5</span></div>
<div class="t" style="left:1448.5px;top:1433.2px;width:57.7px;height:27.3px;background:#fff;"><span style="top:2.3px;font-size:17px;line-height:21.2px;">0,4</span></div>
<div class="t" style="left:1516.0px;top:1433.2px;width:66.5px;height:27.3px;background:#fff;"></div>
<div class="t" style="left:1588.5px;top:1433.2px;width:65.5px;height:27.3px;background:#fff;"></div>
<div class="t" style="left:1666.0px;top:1433.2px;width:42.0px;height:27.3px;background:#E8E4D6;box-shadow:none;border-color:#8A98A8"></div>
<div class="t" style="left:541.3px;top:1466.2px;width:37.5px;height:27.3px;background:#fff;"><span style="top:2.3px;font-size:17px;line-height:21.2px;">2</span></div>
<div class="t" style="left:586.5px;top:1467.7px;width:192.3px;height:27.3px;background:#fff;"><span style="top:2.3px;font-size:17px;line-height:21.2px;">Pipe</span></div>
<div class="t" style="left:788.0px;top:1466.2px;width:54.8px;height:27.3px;background:#fff;"><span style="top:2.3px;font-size:17px;line-height:21.2px;">157,8</span></div>
<div class="t" style="left:852.5px;top:1466.2px;width:76.5px;height:27.3px;background:#fff;"><span style="top:2.3px;font-size:17px;line-height:21.2px;">5,41</span></div>
<div class="t" style="left:939.6px;top:1466.2px;width:82.1px;height:27.3px;background:#fff;"><span style="top:2.3px;font-size:17px;line-height:21.2px;">5,61</span></div>
<div class="t" style="left:1030.5px;top:1466.2px;width:94.5px;height:27.3px;background:#fff;"><span style="top:2.3px;font-size:17px;line-height:21.2px;">9947</span></div>
<div class="t" style="left:1135.0px;top:1466.2px;width:67.7px;height:27.3px;background:#fff;"><span style="top:2.3px;font-size:17px;line-height:21.2px;">2,69</span></div>
<div class="t" style="left:1212.0px;top:1466.2px;width:87.5px;height:27.3px;background:#fff;"><span style="top:2.3px;font-size:17px;line-height:21.2px;">30,443</span></div>
<div class="t" style="left:1309.0px;top:1466.2px;width:57.5px;height:27.3px;background:#fff;"><span style="top:2.3px;font-size:17px;line-height:21.2px;">773</span></div>
<div class="t" style="left:1376.0px;top:1466.2px;width:66.5px;height:27.3px;background:#fff;"><span style="top:2.3px;font-size:17px;line-height:21.2px;">14,5</span></div>
<div class="t" style="left:1448.5px;top:1466.2px;width:57.7px;height:27.3px;background:#fff;"><span style="top:2.3px;font-size:17px;line-height:21.2px;">13,5</span></div>
<div class="t" style="left:1516.0px;top:1466.2px;width:66.5px;height:27.3px;background:#fff;"></div>
<div class="t" style="left:1588.5px;top:1466.2px;width:65.5px;height:27.3px;background:#fff;"></div>
<div class="t" style="left:1666.0px;top:1466.2px;width:42.0px;height:27.3px;background:#8DE88A;box-shadow:none;border-color:#8A98A8"></div>
<div class="t" style="left:541.3px;top:1500.5px;width:37.5px;height:27.3px;background:#fff;"><span style="top:2.3px;font-size:17px;line-height:21.2px;">3</span></div>
<div class="t" style="left:586.5px;top:1502.0px;width:192.3px;height:27.3px;background:#fff;"><span style="top:2.3px;font-size:17px;line-height:21.2px;">Bend</span></div>
<div class="t" style="left:788.0px;top:1500.5px;width:54.8px;height:27.3px;background:#fff;"></div>
<div class="t" style="left:852.5px;top:1499.3px;width:76.5px;height:27.3px;background:#fff;"><span style="top:2.3px;font-size:17px;line-height:21.2px;">13,09</span></div>
<div class="t" style="left:939.6px;top:1499.3px;width:82.1px;height:27.3px;background:#fff;"><span style="top:2.3px;font-size:17px;line-height:21.2px;">1,26</span></div>
<div class="t" style="left:1030.5px;top:1499.3px;width:94.5px;height:27.3px;background:#fff;"><span style="top:2.3px;font-size:17px;line-height:21.2px;">9948</span></div>
<div class="t" style="left:1135.0px;top:1499.3px;width:67.7px;height:27.3px;background:#fff;"></div>
<div class="t" style="left:1212.0px;top:1499.3px;width:87.5px;height:27.3px;background:#fff;"><span style="top:2.3px;font-size:17px;line-height:21.2px;">30,9398</span></div>
<div class="t" style="left:1309.0px;top:1499.3px;width:57.5px;height:27.3px;background:#fff;"><span style="top:2.3px;font-size:17px;line-height:21.2px;">26</span></div>
<div class="t" style="left:1376.0px;top:1499.3px;width:66.5px;height:27.3px;background:#fff;"><span style="top:2.3px;font-size:17px;line-height:21.2px;">0</span></div>
<div class="t" style="left:1448.5px;top:1499.3px;width:57.7px;height:27.3px;background:#fff;"></div>
<div class="t" style="left:1516.0px;top:1499.3px;width:66.5px;height:27.3px;background:#fff;"><span style="top:2.3px;font-size:17px;line-height:21.2px;">0,3</span></div>
<div class="t" style="left:1588.5px;top:1499.3px;width:65.5px;height:27.3px;background:#fff;"><span style="top:2.3px;font-size:17px;line-height:21.2px;">0,3</span></div>
<div class="t" style="left:1666.0px;top:1499.3px;width:42.0px;height:27.3px;background:#E8E4D6;box-shadow:none;border-color:#8A98A8"></div>
<div class="t" style="left:541.3px;top:1533.6px;width:37.5px;height:27.3px;background:#fff;"><span style="top:2.3px;font-size:17px;line-height:21.2px;">4</span></div>
<div class="t" style="left:586.5px;top:1535.1px;width:192.3px;height:27.3px;background:#fff;"><span style="top:2.3px;font-size:17px;line-height:21.2px;">Pipe</span></div>
<div class="t" style="left:788.0px;top:1533.6px;width:54.8px;height:27.3px;background:#fff;"><span style="top:2.3px;font-size:17px;line-height:21.2px;">157,8</span></div>
<div class="t" style="left:852.5px;top:1532.3px;width:76.5px;height:27.3px;background:#fff;"><span style="top:2.3px;font-size:17px;line-height:21.2px;">6,67</span></div>
<div class="t" style="left:939.6px;top:1532.3px;width:82.1px;height:27.3px;background:#fff;"><span style="top:2.3px;font-size:17px;line-height:21.2px;">6,74</span></div>
<div class="t" style="left:1030.5px;top:1532.3px;width:94.5px;height:27.3px;background:#fff;"><span style="top:2.3px;font-size:17px;line-height:21.2px;">17635</span></div>
<div class="t" style="left:1135.0px;top:1532.3px;width:67.7px;height:27.3px;background:#fff;"><span style="top:2.3px;font-size:17px;line-height:21.2px;">2,92</span></div>
<div class="t" style="left:1212.0px;top:1532.3px;width:87.5px;height:27.3px;background:#fff;"><span style="top:2.3px;font-size:17px;line-height:21.2px;">56,5677</span></div>
<div class="t" style="left:1309.0px;top:1532.3px;width:57.5px;height:27.3px;background:#fff;"><span style="top:2.3px;font-size:17px;line-height:21.2px;">642</span></div>
<div class="t" style="left:1376.0px;top:1532.3px;width:66.5px;height:27.3px;background:#fff;"><span style="top:2.3px;font-size:17px;line-height:21.2px;">14</span></div>
<div class="t" style="left:1448.5px;top:1532.3px;width:57.7px;height:27.3px;background:#fff;"><span style="top:2.3px;font-size:17px;line-height:21.2px;">13</span></div>
<div class="t" style="left:1516.0px;top:1532.3px;width:66.5px;height:27.3px;background:#fff;"></div>
<div class="t" style="left:1588.5px;top:1532.3px;width:65.5px;height:27.3px;background:#fff;"></div>
<div class="t" style="left:1666.0px;top:1532.3px;width:42.0px;height:27.3px;background:#8DE88A;box-shadow:none;border-color:#8A98A8"></div>
<div class="t" style="left:541.3px;top:1567.7px;width:37.5px;height:27.3px;background:#fff;"><span style="top:2.3px;font-size:17px;line-height:21.2px;">5</span></div>
<div class="t" style="left:586.5px;top:1568.0px;width:192.3px;height:27.3px;background:#fff;"><span style="top:2.3px;font-size:17px;line-height:21.2px;">Bend</span></div>
<div class="t" style="left:788.0px;top:1567.7px;width:54.8px;height:27.3px;background:#fff;"></div>
<div class="t" style="left:852.5px;top:1565.1px;width:76.5px;height:27.3px;background:#fff;"><span style="top:2.3px;font-size:17px;line-height:21.2px;">15,81</span></div>
<div class="t" style="left:939.6px;top:1565.1px;width:82.1px;height:27.3px;background:#fff;"><span style="top:2.3px;font-size:17px;line-height:21.2px;">1,23</span></div>
<div class="t" style="left:1030.5px;top:1565.1px;width:94.5px;height:27.3px;background:#fff;"><span style="top:2.3px;font-size:17px;line-height:21.2px;">17637</span></div>
<div class="t" style="left:1135.0px;top:1565.1px;width:67.7px;height:27.3px;background:#fff;"></div>
<div class="t" style="left:1212.0px;top:1565.1px;width:87.5px;height:27.3px;background:#fff;"><span style="top:2.3px;font-size:17px;line-height:21.2px;">57,1025</span></div>
<div class="t" style="left:1309.0px;top:1565.1px;width:57.5px;height:27.3px;background:#fff;"><span style="top:2.3px;font-size:17px;line-height:21.2px;">27</span></div>
<div class="t" style="left:1376.0px;top:1565.1px;width:66.5px;height:27.3px;background:#fff;"><span style="top:2.3px;font-size:17px;line-height:21.2px;">0</span></div>
<div class="t" style="left:1448.5px;top:1565.1px;width:57.7px;height:27.3px;background:#fff;"></div>
<div class="t" style="left:1516.0px;top:1565.1px;width:66.5px;height:27.3px;background:#fff;"><span style="top:2.3px;font-size:17px;line-height:21.2px;">0,4</span></div>
<div class="t" style="left:1588.5px;top:1565.1px;width:65.5px;height:27.3px;background:#fff;"><span style="top:2.3px;font-size:17px;line-height:21.2px;">0,4</span></div>
<div class="t" style="left:1666.0px;top:1565.1px;width:42.0px;height:27.3px;background:#E8E4D6;box-shadow:none;border-color:#8A98A8"></div>
<div class="t" style="left:541.3px;top:1600.4px;width:37.5px;height:27.3px;background:#fff;"><span style="top:2.3px;font-size:17px;line-height:21.2px;">6</span></div>
<div class="t" style="left:586.5px;top:1600.7px;width:192.3px;height:27.3px;background:#fff;"><span style="top:2.3px;font-size:17px;line-height:21.2px;">Pipe</span></div>
<div class="t" style="left:788.0px;top:1600.4px;width:54.8px;height:27.3px;background:#fff;"><span style="top:2.3px;font-size:17px;line-height:21.2px;">157,8</span></div>
<div class="t" style="left:852.5px;top:1597.8px;width:76.5px;height:27.3px;background:#fff;"><span style="top:2.3px;font-size:17px;line-height:21.2px;">8,26</span></div>
<div class="t" style="left:939.6px;top:1597.8px;width:82.1px;height:27.3px;background:#fff;"><span style="top:2.3px;font-size:17px;line-height:21.2px;">8,15</span></div>
<div class="t" style="left:1030.5px;top:1597.8px;width:94.5px;height:27.3px;background:#fff;"><span style="top:2.3px;font-size:17px;line-height:21.2px;">23848</span></div>
<div class="t" style="left:1135.0px;top:1597.8px;width:67.7px;height:27.3px;background:#fff;"><span style="top:2.3px;font-size:17px;line-height:21.2px;">3,19</span></div>
<div class="t" style="left:1212.0px;top:1597.8px;width:87.5px;height:27.3px;background:#fff;"><span style="top:2.3px;font-size:17px;line-height:21.2px;">78,3516</span></div>
<div class="t" style="left:1309.0px;top:1597.8px;width:57.5px;height:27.3px;background:#fff;"><span style="top:2.3px;font-size:17px;line-height:21.2px;">522</span></div>
<div class="t" style="left:1376.0px;top:1597.8px;width:66.5px;height:27.3px;background:#fff;"><span style="top:2.3px;font-size:17px;line-height:21.2px;">13,9</span></div>
<div class="t" style="left:1448.5px;top:1597.8px;width:57.7px;height:27.3px;background:#fff;"><span style="top:2.3px;font-size:17px;line-height:21.2px;">13</span></div>
<div class="t" style="left:1516.0px;top:1597.8px;width:66.5px;height:27.3px;background:#fff;"></div>
<div class="t" style="left:1588.5px;top:1597.8px;width:65.5px;height:27.3px;background:#fff;"></div>
<div class="t" style="left:1666.0px;top:1597.8px;width:42.0px;height:27.3px;background:#8DE88A;box-shadow:none;border-color:#8A98A8"></div>
<div class="t" style="left:541.3px;top:1633.1px;width:37.5px;height:27.3px;background:#fff;"><span style="top:2.3px;font-size:17px;line-height:21.2px;">7</span></div>
<div class="t" style="left:586.5px;top:1633.4px;width:192.3px;height:27.3px;background:#fff;"><span style="top:2.3px;font-size:17px;line-height:21.2px;">Bend</span></div>
<div class="t" style="left:788.0px;top:1633.1px;width:54.8px;height:27.3px;background:#fff;"></div>
<div class="t" style="left:852.5px;top:1630.6px;width:76.5px;height:27.3px;background:#fff;"><span style="top:2.3px;font-size:17px;line-height:21.2px;">19,22</span></div>
<div class="t" style="left:939.6px;top:1630.6px;width:82.1px;height:27.3px;background:#fff;"><span style="top:2.3px;font-size:17px;line-height:21.2px;">1,21</span></div>
<div class="t" style="left:1030.5px;top:1630.6px;width:94.5px;height:27.3px;background:#fff;"><span style="top:2.3px;font-size:17px;line-height:21.2px;">23849</span></div>
<div class="t" style="left:1135.0px;top:1630.6px;width:67.7px;height:27.3px;background:#fff;"></div>
<div class="t" style="left:1212.0px;top:1630.6px;width:87.5px;height:27.3px;background:#fff;"><span style="top:2.3px;font-size:17px;line-height:21.2px;">78,9188</span></div>
<div class="t" style="left:1309.0px;top:1630.6px;width:57.5px;height:27.3px;background:#fff;"><span style="top:2.3px;font-size:17px;line-height:21.2px;">28</span></div>
<div class="t" style="left:1376.0px;top:1630.6px;width:66.5px;height:27.3px;background:#fff;"><span style="top:2.3px;font-size:17px;line-height:21.2px;">0</span></div>
<div class="t" style="left:1448.5px;top:1630.6px;width:57.7px;height:27.3px;background:#fff;"></div>
<div class="t" style="left:1516.0px;top:1630.6px;width:66.5px;height:27.3px;background:#fff;"><span style="top:2.3px;font-size:17px;line-height:21.2px;">0,7</span></div>
<div class="t" style="left:1588.5px;top:1630.6px;width:65.5px;height:27.3px;background:#fff;"><span style="top:2.3px;font-size:17px;line-height:21.2px;">0,6</span></div>
<div class="t" style="left:1666.0px;top:1630.6px;width:42.0px;height:27.3px;background:#E8E4D6;box-shadow:none;border-color:#8A98A8"></div>
<div class="t" style="left:541.3px;top:1665.9px;width:37.5px;height:27.3px;background:#fff;"><span style="top:2.3px;font-size:17px;line-height:21.2px;">8</span></div>
<div class="t" style="left:586.5px;top:1666.2px;width:192.3px;height:27.3px;background:#fff;"><span style="top:2.3px;font-size:17px;line-height:21.2px;">Pipe</span></div>
<div class="t" style="left:788.0px;top:1665.9px;width:54.8px;height:27.3px;background:#fff;"><span style="top:2.3px;font-size:17px;line-height:21.2px;">78,93</span></div>
<div class="t" style="left:852.5px;top:1663.3px;width:76.5px;height:27.3px;background:#fff;"><span style="top:2.3px;font-size:17px;line-height:21.2px;">9,3</span></div>
<div class="t" style="left:939.6px;top:1663.3px;width:82.1px;height:27.3px;background:#fff;"><span style="top:2.3px;font-size:17px;line-height:21.2px;">9,06</span></div>
<div class="t" style="left:1030.5px;top:1663.3px;width:94.5px;height:27.3px;background:#fff;"><span style="top:2.3px;font-size:17px;line-height:21.2px;">26780</span></div>
<div class="t" style="left:1135.0px;top:1663.3px;width:67.7px;height:27.3px;background:#fff;"><span style="top:2.3px;font-size:17px;line-height:21.2px;">3,36</span></div>
<div class="t" style="left:1212.0px;top:1663.3px;width:87.5px;height:27.3px;background:#fff;"><span style="top:2.3px;font-size:17px;line-height:21.2px;">88,0658</span></div>
<div class="t" style="left:1309.0px;top:1663.3px;width:57.5px;height:27.3px;background:#fff;"><span style="top:2.3px;font-size:17px;line-height:21.2px;">221</span></div>
<div class="t" style="left:1376.0px;top:1663.3px;width:66.5px;height:27.3px;background:#fff;"><span style="top:2.3px;font-size:17px;line-height:21.2px;">7,8</span></div>
<div class="t" style="left:1448.5px;top:1663.3px;width:57.7px;height:27.3px;background:#fff;"><span style="top:2.3px;font-size:17px;line-height:21.2px;">7,2</span></div>
<div class="t" style="left:1516.0px;top:1663.3px;width:66.5px;height:27.3px;background:#fff;"></div>
<div class="t" style="left:1588.5px;top:1663.3px;width:65.5px;height:27.3px;background:#fff;"></div>
<div class="t" style="left:1666.0px;top:1663.3px;width:42.0px;height:27.3px;background:#8DE88A;box-shadow:none;border-color:#8A98A8"></div>
<div class="t" style="left:541.3px;top:1699.0px;width:37.5px;height:27.3px;background:#fff;"><span style="top:2.3px;font-size:17px;line-height:21.2px;">9</span></div>
<div class="t" style="left:586.5px;top:1699.3px;width:192.3px;height:27.3px;background:#fff;"><span style="top:2.3px;font-size:17px;line-height:21.2px;">Diameter Transfer</span></div>
<div class="t" style="left:788.0px;top:1699.0px;width:54.8px;height:27.3px;background:#fff;"></div>
<div class="t" style="left:852.5px;top:1695.8px;width:76.5px;height:27.3px;background:#fff;"></div>
<div class="t" style="left:939.6px;top:1695.8px;width:82.1px;height:27.3px;background:#fff;"><span style="top:2.3px;font-size:17px;line-height:21.2px;">9,06</span></div>
<div class="t" style="left:1030.5px;top:1695.8px;width:94.5px;height:27.3px;background:#fff;"><span style="top:2.3px;font-size:17px;line-height:21.2px;">26780</span></div>
<div class="t" style="left:1135.0px;top:1695.8px;width:67.7px;height:27.3px;background:#fff;"></div>
<div class="t" style="left:1212.0px;top:1695.8px;width:87.5px;height:27.3px;background:#fff;"><span style="top:2.3px;font-size:17px;line-height:21.2px;">88,0658</span></div>
<div class="t" style="left:1309.0px;top:1695.8px;width:57.5px;height:27.3px;background:#fff;"></div>
<div class="t" style="left:1376.0px;top:1695.8px;width:66.5px;height:27.3px;background:#fff;"><span style="top:2.3px;font-size:17px;line-height:21.2px;">0</span></div>
<div class="t" style="left:1448.5px;top:1695.8px;width:57.7px;height:27.3px;background:#fff;"><span style="top:2.3px;font-size:17px;line-height:21.2px;">0</span></div>
<div class="t" style="left:1516.0px;top:1695.8px;width:66.5px;height:27.3px;background:#fff;"></div>
<div class="t" style="left:1588.5px;top:1695.8px;width:65.5px;height:27.3px;background:#fff;"></div>
<div class="t" style="left:1666.0px;top:1695.8px;width:42.0px;height:27.3px;background:#E8E4D6;box-shadow:none;border-color:#8A98A8"></div>
<div class="t" style="left:541.3px;top:1731.7px;width:37.5px;height:27.3px;background:#fff;"><span style="top:2.3px;font-size:17px;line-height:21.2px;">10</span></div>
<div class="t" style="left:586.5px;top:1732.0px;width:192.3px;height:27.3px;background:#fff;"><span style="top:2.3px;font-size:17px;line-height:21.2px;">Pipe</span></div>
<div class="t" style="left:788.0px;top:1731.7px;width:54.8px;height:27.3px;background:#fff;"><span style="top:2.3px;font-size:17px;line-height:21.2px;">78,86</span></div>
<div class="t" style="left:852.5px;top:1728.5px;width:76.5px;height:27.3px;background:#fff;"><span style="top:2.3px;font-size:17px;line-height:21.2px;">10,43</span></div>
<div class="t" style="left:939.6px;top:1728.5px;width:82.1px;height:27.3px;background:#fff;"><span style="top:2.3px;font-size:17px;line-height:21.2px;">10,04</span></div>
<div class="t" style="left:1030.5px;top:1728.5px;width:94.5px;height:27.3px;background:#fff;"><span style="top:2.3px;font-size:17px;line-height:21.2px;">29281</span></div>
<div class="t" style="left:1135.0px;top:1728.5px;width:67.7px;height:27.3px;background:#fff;"><span style="top:2.3px;font-size:17px;line-height:21.2px;">3,53</span></div>
<div class="t" style="left:1212.0px;top:1728.5px;width:87.5px;height:27.3px;background:#fff;"><span style="top:2.3px;font-size:17px;line-height:21.2px;">96,3378</span></div>
<div class="t" style="left:1309.0px;top:1728.5px;width:57.5px;height:27.3px;background:#fff;"><span style="top:2.3px;font-size:17px;line-height:21.2px;">199</span></div>
<div class="t" style="left:1376.0px;top:1728.5px;width:66.5px;height:27.3px;background:#fff;"><span style="top:2.3px;font-size:17px;line-height:21.2px;">7,4</span></div>
<div class="t" style="left:1448.5px;top:1728.5px;width:57.7px;height:27.3px;background:#fff;"><span style="top:2.3px;font-size:17px;line-height:21.2px;">6,9</span></div>
<div class="t" style="left:1516.0px;top:1728.5px;width:66.5px;height:27.3px;background:#fff;"></div>
<div class="t" style="left:1588.5px;top:1728.5px;width:65.5px;height:27.3px;background:#fff;"><span style="top:2.3px;font-size:17px;line-height:21.2px;">9,3</span></div>
<div class="t" style="left:1666.0px;top:1728.5px;width:42.0px;height:27.3px;background:#8DE88A;box-shadow:none;border-color:#8A98A8"></div>
<div class="t" style="left:541.3px;top:1767.0px;width:37.5px;height:27.3px;background:#fff;"><span style="top:2.3px;font-size:17px;line-height:21.2px;">11</span></div>
<div class="t" style="left:586.5px;top:1767.3px;width:192.3px;height:27.3px;background:#fff;"><span style="top:2.3px;font-size:17px;line-height:21.2px;">Bend</span></div>
<div class="t" style="left:788.0px;top:1767.0px;width:54.8px;height:27.3px;background:#fff;"></div>
<div class="t" style="left:852.5px;top:1764.5px;width:76.5px;height:27.3px;background:#fff;"><span style="top:2.3px;font-size:17px;line-height:21.2px;">23,89</span></div>
<div class="t" style="left:939.6px;top:1764.5px;width:82.1px;height:27.3px;background:#fff;"><span style="top:2.3px;font-size:17px;line-height:21.2px;">1,19</span></div>
<div class="t" style="left:1030.5px;top:1764.5px;width:94.5px;height:27.3px;background:#fff;"><span style="top:2.3px;font-size:17px;line-height:21.2px;">29283</span></div>
<div class="t" style="left:1135.0px;top:1764.5px;width:67.7px;height:27.3px;background:#fff;"></div>
<div class="t" style="left:1212.0px;top:1764.5px;width:87.5px;height:27.3px;background:#fff;"><span style="top:2.3px;font-size:17px;line-height:21.2px;">96,9342</span></div>
<div class="t" style="left:1309.0px;top:1764.5px;width:57.5px;height:27.3px;background:#fff;"><span style="top:2.3px;font-size:17px;line-height:21.2px;">28</span></div>
<div class="t" style="left:1376.0px;top:1764.5px;width:66.5px;height:27.3px;background:#fff;"><span style="top:2.3px;font-size:17px;line-height:21.2px;">0</span></div>
<div class="t" style="left:1448.5px;top:1764.5px;width:57.7px;height:27.3px;background:#fff;"></div>
<div class="t" style="left:1516.0px;top:1764.5px;width:66.5px;height:27.3px;background:#fff;"><span style="top:2.3px;font-size:17px;line-height:21.2px;">1,1</span></div>
<div class="t" style="left:1588.5px;top:1764.5px;width:65.5px;height:27.3px;background:#fff;"><span style="top:2.3px;font-size:17px;line-height:21.2px;">1</span></div>
<div class="t" style="left:1666.0px;top:1764.5px;width:42.0px;height:27.3px;background:#E8E4D6;box-shadow:none;border-color:#8A98A8"></div>
<div class="t" style="left:541.3px;top:1801.4px;width:37.5px;height:27.3px;background:#fff;"><span style="top:2.3px;font-size:17px;line-height:21.2px;">12</span></div>
<div class="t" style="left:586.5px;top:1801.7px;width:192.3px;height:27.3px;background:#fff;"><span style="top:2.3px;font-size:17px;line-height:21.2px;">Pipe</span></div>
<div class="t" style="left:788.0px;top:1801.4px;width:54.8px;height:27.3px;background:#fff;"><span style="top:2.3px;font-size:17px;line-height:21.2px;">157,8</span></div>
<div class="t" style="left:852.5px;top:1799.1px;width:76.5px;height:27.3px;background:#fff;"><span style="top:2.3px;font-size:17px;line-height:21.2px;">14,01</span></div>
<div class="t" style="left:939.6px;top:1799.1px;width:82.1px;height:27.3px;background:#fff;"><span style="top:2.3px;font-size:17px;line-height:21.2px;">13,09</span></div>
<div class="t" style="left:1030.5px;top:1799.1px;width:94.5px;height:27.3px;background:#fff;"><span style="top:2.3px;font-size:17px;line-height:21.2px;">34572</span></div>
<div class="t" style="left:1135.0px;top:1799.1px;width:67.7px;height:27.3px;background:#fff;"><span style="top:2.3px;font-size:17px;line-height:21.2px;">4,03</span></div>
<div class="t" style="left:1212.0px;top:1799.1px;width:87.5px;height:27.3px;background:#fff;"><span style="top:2.3px;font-size:17px;line-height:21.2px;">110,7142</span></div>
<div class="t" style="left:1309.0px;top:1799.1px;width:57.5px;height:27.3px;background:#fff;"><span style="top:2.3px;font-size:17px;line-height:21.2px;">328</span></div>
<div class="t" style="left:1376.0px;top:1799.1px;width:66.5px;height:27.3px;background:#fff;"><span style="top:2.3px;font-size:17px;line-height:21.2px;">19,3</span></div>
<div class="t" style="left:1448.5px;top:1799.1px;width:57.7px;height:27.3px;background:#fff;"><span style="top:2.3px;font-size:17px;line-height:21.2px;">18</span></div>
<div class="t" style="left:1516.0px;top:1799.1px;width:66.5px;height:27.3px;background:#fff;"></div>
<div class="t" style="left:1588.5px;top:1799.1px;width:65.5px;height:27.3px;background:#fff;"></div>
<div class="t" style="left:1666.0px;top:1799.1px;width:42.0px;height:27.3px;background:#8DE88A;box-shadow:none;border-color:#8A98A8"></div>
<div class="t" style="left:541.3px;top:1833.1px;width:37.5px;height:27.3px;background:#fff;"><span style="top:2.3px;font-size:17px;line-height:21.2px;">13</span></div>
<div class="t" style="left:586.5px;top:1833.4px;width:192.3px;height:27.3px;background:#fff;"><span style="top:2.3px;font-size:17px;line-height:21.2px;">Bend</span></div>
<div class="t" style="left:788.0px;top:1833.1px;width:54.8px;height:27.3px;background:#fff;"></div>
<div class="t" style="left:852.5px;top:1831.2px;width:76.5px;height:27.3px;background:#fff;"><span style="top:2.3px;font-size:17px;line-height:21.2px;">31,61</span></div>
<div class="t" style="left:939.6px;top:1831.2px;width:82.1px;height:27.3px;background:#fff;"><span style="top:2.3px;font-size:17px;line-height:21.2px;">1,17</span></div>
<div class="t" style="left:1030.5px;top:1831.2px;width:94.5px;height:27.3px;background:#fff;"><span style="top:2.3px;font-size:17px;line-height:21.2px;">34573</span></div>
<div class="t" style="left:1135.0px;top:1831.2px;width:67.7px;height:27.3px;background:#fff;"></div>
<div class="t" style="left:1212.0px;top:1831.2px;width:87.5px;height:27.3px;background:#fff;"><span style="top:2.3px;font-size:17px;line-height:21.2px;">110,9942</span></div>
<div class="t" style="left:1309.0px;top:1831.2px;width:57.5px;height:27.3px;background:#fff;"><span style="top:2.3px;font-size:17px;line-height:21.2px;">10</span></div>
<div class="t" style="left:1376.0px;top:1831.2px;width:66.5px;height:27.3px;background:#fff;"><span style="top:2.3px;font-size:17px;line-height:21.2px;">0</span></div>
<div class="t" style="left:1448.5px;top:1831.2px;width:57.7px;height:27.3px;background:#fff;"></div>
<div class="t" style="left:1516.0px;top:1831.2px;width:66.5px;height:27.3px;background:#fff;"><span style="top:2.3px;font-size:17px;line-height:21.2px;">1,9</span></div>
<div class="t" style="left:1588.5px;top:1831.2px;width:65.5px;height:27.3px;background:#fff;"><span style="top:2.3px;font-size:17px;line-height:21.2px;">1,7</span></div>
<div class="t" style="left:1666.0px;top:1831.2px;width:42.0px;height:27.3px;background:#E8E4D6;box-shadow:none;border-color:#8A98A8"></div>
<div class="t" style="left:541.3px;top:1867.2px;width:37.5px;height:27.3px;background:#fff;"><span style="top:2.3px;font-size:17px;line-height:21.2px;">14</span></div>
<div class="t" style="left:586.5px;top:1867.5px;width:192.3px;height:27.3px;background:#fff;"><span style="top:2.3px;font-size:17px;line-height:21.2px;">Pipe</span></div>
<div class="t" style="left:788.0px;top:1867.2px;width:54.8px;height:27.3px;background:#fff;"><span style="top:2.3px;font-size:17px;line-height:21.2px;">0</span></div>
<div class="t" style="left:852.5px;top:1863.9px;width:76.5px;height:27.3px;background:#fff;"><span style="top:2.3px;font-size:17px;line-height:21.2px;">14,13</span></div>
<div class="t" style="left:939.6px;top:1863.9px;width:82.1px;height:27.3px;background:#fff;"><span style="top:2.3px;font-size:17px;line-height:21.2px;">6,92</span></div>
<div class="t" style="left:1030.5px;top:1863.9px;width:94.5px;height:27.3px;background:#fff;"><span style="top:2.3px;font-size:17px;line-height:21.2px;">34699</span></div>
<div class="t" style="left:1135.0px;top:1863.9px;width:67.7px;height:27.3px;background:#fff;"><span style="top:2.3px;font-size:17px;line-height:21.2px;">4,55</span></div>
<div class="t" style="left:1212.0px;top:1863.9px;width:87.5px;height:27.3px;background:#fff;"><span style="top:2.3px;font-size:17px;line-height:21.2px;">110,9952</span></div>
<div class="t" style="left:1309.0px;top:1863.9px;width:57.5px;height:27.3px;background:#fff;"><span style="top:2.3px;font-size:17px;line-height:21.2px;">0</span></div>
<div class="t" style="left:1376.0px;top:1863.9px;width:66.5px;height:27.3px;background:#fff;"><span style="top:2.3px;font-size:17px;line-height:21.2px;">0,5</span></div>
<div class="t" style="left:1448.5px;top:1863.9px;width:57.7px;height:27.3px;background:#fff;"><span style="top:2.3px;font-size:17px;line-height:21.2px;">0,5</span></div>
<div class="t" style="left:1516.0px;top:1863.9px;width:66.5px;height:27.3px;background:#fff;"></div>
<div class="t" style="left:1588.5px;top:1863.9px;width:65.5px;height:27.3px;background:#fff;"></div>
<div class="t" style="left:1666.0px;top:1863.9px;width:42.0px;height:27.3px;background:#8DE88A;box-shadow:none;border-color:#8A98A8"></div>
<div class="t" style="left:539.8px;top:1899.9px;width:37.7px;height:27.3px;background:#fff;"><span style="top:2.3px;font-size:17px;line-height:21.2px;">15</span></div>
<div class="t" style="left:586.5px;top:1900.2px;width:192.3px;height:27.3px;background:#fff;"><span style="top:2.3px;font-size:17px;line-height:21.2px;">Diameter Transfer</span></div>
<div class="t" style="left:788.0px;top:1899.9px;width:54.8px;height:27.3px;background:#fff;"></div>
<div class="t" style="left:852.5px;top:1896.7px;width:76.5px;height:27.3px;background:#fff;"><span style="top:2.3px;font-size:17px;line-height:21.2px;">14,13</span></div>
<div class="t" style="left:939.6px;top:1896.7px;width:82.1px;height:27.3px;background:#fff;"><span style="top:2.3px;font-size:17px;line-height:21.2px;">6,92</span></div>
<div class="t" style="left:1030.5px;top:1896.7px;width:94.5px;height:27.3px;background:#fff;"><span style="top:2.3px;font-size:17px;line-height:21.2px;">34699</span></div>
<div class="t" style="left:1135.0px;top:1896.7px;width:67.7px;height:27.3px;background:#fff;"></div>
<div class="t" style="left:1212.0px;top:1896.7px;width:87.5px;height:27.3px;background:#fff;"><span style="top:2.3px;font-size:17px;line-height:21.2px;">110,9952</span></div>
<div class="t" style="left:1309.0px;top:1896.7px;width:57.5px;height:27.3px;background:#fff;"></div>
<div class="t" style="left:1376.0px;top:1896.7px;width:66.5px;height:27.3px;background:#fff;"><span style="top:2.3px;font-size:17px;line-height:21.2px;">0</span></div>
<div class="t" style="left:1448.5px;top:1896.7px;width:57.7px;height:27.3px;background:#fff;"><span style="top:2.3px;font-size:17px;line-height:21.2px;">0</span></div>
<div class="t" style="left:1516.0px;top:1896.7px;width:66.5px;height:27.3px;background:#fff;"></div>
<div class="t" style="left:1588.5px;top:1896.7px;width:65.5px;height:27.3px;background:#fff;"></div>
<div class="t" style="left:1668.5px;top:1896.7px;width:42.5px;height:27.3px;background:#E8E4D6;box-shadow:none;border-color:#8A98A8"></div>
<div class="t" style="left:539.8px;top:1932.6px;width:37.7px;height:27.3px;background:#fff;"><span style="top:2.3px;font-size:17px;line-height:21.2px;">16</span></div>
<div class="t" style="left:586.5px;top:1932.9px;width:192.3px;height:27.3px;background:#fff;"><span style="top:2.3px;font-size:17px;line-height:21.2px;">Pipe</span></div>
<div class="t" style="left:788.0px;top:1932.6px;width:54.8px;height:27.3px;background:#fff;"><span style="top:2.3px;font-size:17px;line-height:21.2px;">30</span></div>
<div class="t" style="left:852.5px;top:1930.0px;width:76.5px;height:27.3px;background:#fff;"><span style="top:2.3px;font-size:17px;line-height:21.2px;">19,41</span></div>
<div class="t" style="left:939.6px;top:1930.0px;width:82.1px;height:27.3px;background:#fff;"><span style="top:2.3px;font-size:17px;line-height:21.2px;">16,76</span></div>
<div class="t" style="left:1030.5px;top:1930.0px;width:94.5px;height:27.3px;background:#fff;"><span style="top:2.3px;font-size:17px;line-height:21.2px;">38835</span></div>
<div class="t" style="left:1135.0px;top:1930.0px;width:67.7px;height:27.3px;background:#fff;"><span style="top:2.3px;font-size:17px;line-height:21.2px;">4,69</span></div>
<div class="t" style="left:1212.0px;top:1930.0px;width:87.5px;height:27.3px;background:#fff;"><span style="top:2.3px;font-size:17px;line-height:21.2px;">113,0632</span></div>
<div class="t" style="left:1309.0px;top:1930.0px;width:57.5px;height:27.3px;background:#fff;"><span style="top:2.3px;font-size:17px;line-height:21.2px;">48</span></div>
<div class="t" style="left:1376.0px;top:1930.0px;width:66.5px;height:27.3px;background:#fff;"><span style="top:2.3px;font-size:17px;line-height:21.2px;">20,7</span></div>
<div class="t" style="left:1448.5px;top:1930.0px;width:57.7px;height:27.3px;background:#fff;"><span style="top:2.3px;font-size:17px;line-height:21.2px;">19,3</span></div>
<div class="t" style="left:1516.0px;top:1930.0px;width:66.5px;height:27.3px;background:#fff;"></div>
<div class="t" style="left:1588.5px;top:1930.0px;width:65.5px;height:27.3px;background:#fff;"></div>
<div class="t" style="left:1668.5px;top:1930.0px;width:42.5px;height:27.3px;background:#8DE88A;box-shadow:none;border-color:#8A98A8"></div>
<div class="t" style="left:539.8px;top:1964.1px;width:37.7px;height:27.3px;background:#fff;"><span style="top:2.3px;font-size:17px;line-height:21.2px;">17</span></div>
<div class="t" style="left:586.5px;top:1964.4px;width:192.3px;height:27.3px;background:#fff;"><span style="top:2.3px;font-size:17px;line-height:21.2px;">Bend</span></div>
<div class="t" style="left:788.0px;top:1964.1px;width:54.8px;height:27.3px;background:#fff;"></div>
<div class="t" style="left:852.5px;top:1962.8px;width:76.5px;height:27.3px;background:#fff;"><span style="top:2.3px;font-size:17px;line-height:21.2px;">43,32</span></div>
<div class="t" style="left:939.6px;top:1962.8px;width:82.1px;height:27.3px;background:#fff;"><span style="top:2.3px;font-size:17px;line-height:21.2px;">1,16</span></div>
<div class="t" style="left:1030.5px;top:1962.8px;width:94.5px;height:27.3px;background:#fff;"><span style="top:2.3px;font-size:17px;line-height:21.2px;">38840</span></div>
<div class="t" style="left:1135.0px;top:1962.8px;width:67.7px;height:27.3px;background:#fff;"></div>
<div class="t" style="left:1212.0px;top:1962.8px;width:87.5px;height:27.3px;background:#fff;"><span style="top:2.3px;font-size:17px;line-height:21.2px;">113,763</span></div>
<div class="t" style="left:1309.0px;top:1962.8px;width:57.5px;height:27.3px;background:#fff;"><span style="top:2.3px;font-size:17px;line-height:21.2px;">25</span></div>
<div class="t" style="left:1376.0px;top:1962.8px;width:66.5px;height:27.3px;background:#fff;"><span style="top:2.3px;font-size:17px;line-height:21.2px;">0</span></div>
<div class="t" style="left:1448.5px;top:1962.8px;width:57.7px;height:27.3px;background:#fff;"></div>
<div class="t" style="left:1516.0px;top:1962.8px;width:66.5px;height:27.3px;background:#fff;"><span style="top:2.3px;font-size:17px;line-height:21.2px;">3,1</span></div>
<div class="t" style="left:1588.5px;top:1962.8px;width:65.5px;height:27.3px;background:#fff;"><span style="top:2.3px;font-size:17px;line-height:21.2px;">2,9</span></div>
<div class="t" style="left:1668.5px;top:1962.8px;width:42.5px;height:27.3px;background:#E8E4D6;box-shadow:none;border-color:#8A98A8"></div>
<div class="t" style="left:539.8px;top:2000.3px;width:37.7px;height:27.3px;background:#fff;"><span style="top:2.3px;font-size:17px;line-height:21.2px;">18</span></div>
<div class="t" style="left:586.5px;top:2000.6px;width:192.3px;height:27.3px;background:#fff;"><span style="top:2.3px;font-size:17px;line-height:21.2px;">Pipe</span></div>
<div class="t" style="left:788.0px;top:2000.3px;width:54.8px;height:27.3px;background:#fff;"><span style="top:2.3px;font-size:17px;line-height:21.2px;">10,01</span></div>
<div class="t" style="left:852.5px;top:1999.0px;width:76.5px;height:27.3px;background:#fff;"><span style="top:2.3px;font-size:17px;line-height:21.2px;">21,47</span></div>
<div class="t" style="left:939.6px;top:1999.0px;width:82.1px;height:27.3px;background:#fff;"><span style="top:2.3px;font-size:17px;line-height:21.2px;">19,07</span></div>
<div class="t" style="left:1030.5px;top:1999.0px;width:94.5px;height:27.3px;background:#fff;"><span style="top:2.3px;font-size:17px;line-height:21.2px;">39910</span></div>
<div class="t" style="left:1135.0px;top:1999.0px;width:67.7px;height:27.3px;background:#fff;"><span style="top:2.3px;font-size:17px;line-height:21.2px;">4,92</span></div>
<div class="t" style="left:1212.0px;top:1999.0px;width:87.5px;height:27.3px;background:#fff;"><span style="top:2.3px;font-size:17px;line-height:21.2px;">114,321</span></div>
<div class="t" style="left:1309.0px;top:1999.0px;width:57.5px;height:27.3px;background:#fff;"><span style="top:2.3px;font-size:17px;line-height:21.2px;">12</span></div>
<div class="t" style="left:1376.0px;top:1999.0px;width:66.5px;height:27.3px;background:#fff;"><span style="top:2.3px;font-size:17px;line-height:21.2px;">6,6</span></div>
<div class="t" style="left:1448.5px;top:1999.0px;width:57.7px;height:27.3px;background:#fff;"><span style="top:2.3px;font-size:17px;line-height:21.2px;">6,1</span></div>
<div class="t" style="left:1516.0px;top:1999.0px;width:66.5px;height:27.3px;background:#fff;"></div>
<div class="t" style="left:1588.5px;top:1999.0px;width:65.5px;height:27.3px;background:#fff;"></div>
<div class="t" style="left:1668.5px;top:1999.0px;width:42.5px;height:27.3px;background:#8DE88A;box-shadow:none;border-color:#8A98A8"></div>
<div class="t" style="left:539.8px;top:2034.6px;width:37.7px;height:27.3px;background:#fff;"><span style="top:2.3px;font-size:17px;line-height:21.2px;">19</span></div>
<div class="t" style="left:586.5px;top:2034.9px;width:192.3px;height:27.3px;background:#fff;"><span style="top:2.3px;font-size:17px;line-height:21.2px;">Bend</span></div>
<div class="t" style="left:788.0px;top:2034.6px;width:54.8px;height:27.3px;background:#fff;"></div>
<div class="t" style="left:852.5px;top:2032.9px;width:76.5px;height:27.3px;background:#fff;"><span style="top:2.3px;font-size:17px;line-height:21.2px;">47,7</span></div>
<div class="t" style="left:939.6px;top:2032.9px;width:82.1px;height:27.3px;background:#fff;"><span style="top:2.3px;font-size:17px;line-height:21.2px;">1,16</span></div>
<div class="t" style="left:1030.5px;top:2032.9px;width:94.5px;height:27.3px;background:#fff;"><span style="top:2.3px;font-size:17px;line-height:21.2px;">39913</span></div>
<div class="t" style="left:1135.0px;top:2032.9px;width:67.7px;height:27.3px;background:#fff;"></div>
<div class="t" style="left:1212.0px;top:2032.9px;width:87.5px;height:27.3px;background:#fff;"><span style="top:2.3px;font-size:17px;line-height:21.2px;">114,751</span></div>
<div class="t" style="left:1309.0px;top:2032.9px;width:57.5px;height:27.3px;background:#fff;"><span style="top:2.3px;font-size:17px;line-height:21.2px;">15</span></div>
<div class="t" style="left:1376.0px;top:2032.9px;width:66.5px;height:27.3px;background:#fff;"><span style="top:2.3px;font-size:17px;line-height:21.2px;">0</span></div>
<div class="t" style="left:1448.5px;top:2032.9px;width:57.7px;height:27.3px;background:#fff;"></div>
<div class="t" style="left:1516.0px;top:2032.9px;width:66.5px;height:27.3px;background:#fff;"><span style="top:2.3px;font-size:17px;line-height:21.2px;">4</span></div>
<div class="t" style="left:1588.5px;top:2032.9px;width:65.5px;height:27.3px;background:#fff;"><span style="top:2.3px;font-size:17px;line-height:21.2px;">3,8</span></div>
<div class="t" style="left:1668.5px;top:2032.9px;width:42.5px;height:27.3px;background:#E8E4D6;box-shadow:none;border-color:#8A98A8"></div>
<div class="t" style="left:539.8px;top:2068.6px;width:37.7px;height:27.3px;background:#fff;"><span style="top:2.3px;font-size:17px;line-height:21.2px;">20</span></div>
<div class="t" style="left:586.5px;top:2068.9px;width:192.3px;height:27.3px;background:#fff;"></div>
<div class="t" style="left:788.0px;top:2068.6px;width:54.8px;height:27.3px;background:#fff;"></div>
<div class="t" style="left:852.5px;top:2065.8px;width:76.5px;height:27.3px;background:#fff;"></div>
<div class="t" style="left:939.6px;top:2065.8px;width:82.1px;height:27.3px;background:#fff;"></div>
<div class="t" style="left:1030.5px;top:2065.8px;width:94.5px;height:27.3px;background:#fff;"></div>
<div class="t" style="left:1135.0px;top:2065.8px;width:67.7px;height:27.3px;background:#fff;"></div>
<div class="t" style="left:1212.0px;top:2065.8px;width:87.5px;height:27.3px;background:#fff;"></div>
<div class="t" style="left:1309.0px;top:2065.8px;width:57.5px;height:27.3px;background:#fff;"></div>
<div class="t" style="left:1376.0px;top:2065.8px;width:66.5px;height:27.3px;background:#fff;"></div>
<div class="t" style="left:1448.5px;top:2065.8px;width:57.7px;height:27.3px;background:#fff;"></div>
<div class="t" style="left:1516.0px;top:2065.8px;width:66.5px;height:27.3px;background:#fff;"></div>
<div class="t" style="left:1588.5px;top:2065.8px;width:65.5px;height:27.3px;background:#fff;"></div>
<div class="t" style="left:1668.5px;top:2065.8px;width:42.5px;height:27.3px;background:#E8E4D6;box-shadow:none;border-color:#8A98A8"></div>
<div class="t" style="left:539.8px;top:2101.7px;width:37.7px;height:27.3px;background:#fff;"><span style="top:2.3px;font-size:17px;line-height:21.2px;">21</span></div>
<div class="t" style="left:586.5px;top:2102.0px;width:192.3px;height:27.3px;background:#fff;"></div>
<div class="t" style="left:788.0px;top:2101.7px;width:54.8px;height:27.3px;background:#fff;"></div>
<div class="t" style="left:852.5px;top:2098.7px;width:76.5px;height:27.3px;background:#fff;"></div>
<div class="t" style="left:939.6px;top:2098.7px;width:82.1px;height:27.3px;background:#fff;"></div>
<div class="t" style="left:1030.5px;top:2098.7px;width:94.5px;height:27.3px;background:#fff;"></div>
<div class="t" style="left:1135.0px;top:2098.7px;width:67.7px;height:27.3px;background:#fff;"></div>
<div class="t" style="left:1212.0px;top:2098.7px;width:87.5px;height:27.3px;background:#fff;"></div>
<div class="t" style="left:1309.0px;top:2098.7px;width:57.5px;height:27.3px;background:#fff;"></div>
<div class="t" style="left:1376.0px;top:2098.7px;width:66.5px;height:27.3px;background:#fff;"></div>
<div class="t" style="left:1448.5px;top:2098.7px;width:57.7px;height:27.3px;background:#fff;"></div>
<div class="t" style="left:1516.0px;top:2098.7px;width:66.5px;height:27.3px;background:#fff;"></div>
<div class="t" style="left:1588.5px;top:2098.7px;width:65.5px;height:27.3px;background:#fff;"></div>
<div class="t" style="left:1668.5px;top:2098.7px;width:42.5px;height:27.3px;background:#E8E4D6;box-shadow:none;border-color:#8A98A8"></div>
<div class="t" style="left:539.8px;top:2136.0px;width:37.7px;height:27.3px;background:#fff;"><span style="top:2.3px;font-size:17px;line-height:21.2px;">22</span></div>
<div class="t" style="left:586.5px;top:2136.3px;width:192.3px;height:27.3px;background:#fff;"></div>
<div class="t" style="left:788.0px;top:2136.0px;width:54.8px;height:27.3px;background:#fff;"></div>
<div class="t" style="left:852.5px;top:2132.8px;width:76.5px;height:27.3px;background:#fff;"></div>
<div class="t" style="left:939.6px;top:2132.8px;width:82.1px;height:27.3px;background:#fff;"></div>
<div class="t" style="left:1030.5px;top:2132.8px;width:94.5px;height:27.3px;background:#fff;"></div>
<div class="t" style="left:1135.0px;top:2132.8px;width:67.7px;height:27.3px;background:#fff;"></div>
<div class="t" style="left:1212.0px;top:2132.8px;width:87.5px;height:27.3px;background:#fff;"></div>
<div class="t" style="left:1309.0px;top:2132.8px;width:57.5px;height:27.3px;background:#fff;"></div>
<div class="t" style="left:1376.0px;top:2132.8px;width:66.5px;height:27.3px;background:#fff;"></div>
<div class="t" style="left:1448.5px;top:2132.8px;width:57.7px;height:27.3px;background:#fff;"></div>
<div class="t" style="left:1516.0px;top:2132.8px;width:66.5px;height:27.3px;background:#fff;"></div>
<div class="t" style="left:1588.5px;top:2132.8px;width:65.5px;height:27.3px;background:#fff;"></div>
<div class="t" style="left:1668.5px;top:2132.8px;width:42.5px;height:27.3px;background:#E8E4D6;box-shadow:none;border-color:#8A98A8"></div>
<div class="t" style="left:539.8px;top:2170.0px;width:37.7px;height:27.3px;background:#fff;"><span style="top:2.3px;font-size:17px;line-height:21.2px;">23</span></div>
<div class="t" style="left:586.5px;top:2170.3px;width:192.3px;height:27.3px;background:#fff;"></div>
<div class="t" style="left:788.0px;top:2170.0px;width:54.8px;height:27.3px;background:#fff;"></div>
<div class="t" style="left:852.5px;top:2166.1px;width:76.5px;height:27.3px;background:#fff;"></div>
<div class="t" style="left:939.6px;top:2166.1px;width:82.1px;height:27.3px;background:#fff;"></div>
<div class="t" style="left:1030.5px;top:2166.1px;width:94.5px;height:27.3px;background:#fff;"></div>
<div class="t" style="left:1135.0px;top:2166.1px;width:67.7px;height:27.3px;background:#fff;"></div>
<div class="t" style="left:1212.0px;top:2166.1px;width:87.5px;height:27.3px;background:#fff;"></div>
<div class="t" style="left:1309.0px;top:2166.1px;width:57.5px;height:27.3px;background:#fff;"></div>
<div class="t" style="left:1376.0px;top:2166.1px;width:66.5px;height:27.3px;background:#fff;"></div>
<div class="t" style="left:1448.5px;top:2166.1px;width:57.7px;height:27.3px;background:#fff;"></div>
<div class="t" style="left:1516.0px;top:2166.1px;width:66.5px;height:27.3px;background:#fff;"></div>
<div class="t" style="left:1588.5px;top:2166.1px;width:65.5px;height:27.3px;background:#fff;"></div>
<div class="t" style="left:1666.0px;top:2166.1px;width:45.0px;height:27.3px;background:#E8E4D6;box-shadow:none;border-color:#8A98A8"></div>
<div class="t" style="left:539.8px;top:2203.4px;width:37.7px;height:27.3px;background:#fff;"><span style="top:2.3px;font-size:17px;line-height:21.2px;">24</span></div>
<div class="t" style="left:586.5px;top:2203.7px;width:192.3px;height:27.3px;background:#fff;"></div>
<div class="t" style="left:788.0px;top:2203.4px;width:54.8px;height:27.3px;background:#fff;"></div>
<div class="t" style="left:852.5px;top:2198.6px;width:76.5px;height:27.3px;background:#fff;"></div>
<div class="t" style="left:939.6px;top:2198.6px;width:82.1px;height:27.3px;background:#fff;"></div>
<div class="t" style="left:1030.5px;top:2198.6px;width:94.5px;height:27.3px;background:#fff;"></div>
<div class="t" style="left:1135.0px;top:2198.6px;width:67.7px;height:27.3px;background:#fff;"></div>
<div class="t" style="left:1212.0px;top:2198.6px;width:87.5px;height:27.3px;background:#fff;"></div>
<div class="t" style="left:1309.0px;top:2198.6px;width:57.5px;height:27.3px;background:#fff;"></div>
<div class="t" style="left:1376.0px;top:2198.6px;width:66.5px;height:27.3px;background:#fff;"></div>
<div class="t" style="left:1448.5px;top:2198.6px;width:57.7px;height:27.3px;background:#fff;"></div>
<div class="t" style="left:1516.0px;top:2198.6px;width:66.5px;height:27.3px;background:#fff;"></div>
<div class="t" style="left:1588.5px;top:2198.6px;width:65.5px;height:27.3px;background:#fff;"></div>
<div class="t" style="left:1666.0px;top:2198.6px;width:45.0px;height:27.3px;background:#E8E4D6;box-shadow:none;border-color:#8A98A8"></div>
<div class="t" style="left:539.8px;top:2236.0px;width:37.7px;height:27.3px;background:#fff;"><span style="top:2.3px;font-size:17px;line-height:21.2px;">25</span></div>
<div class="t" style="left:586.5px;top:2236.3px;width:192.3px;height:27.3px;background:#fff;"></div>
<div class="t" style="left:788.0px;top:2236.0px;width:54.8px;height:27.3px;background:#fff;"></div>
<div class="t" style="left:852.5px;top:2231.6px;width:76.5px;height:27.3px;background:#fff;"></div>
<div class="t" style="left:939.6px;top:2231.6px;width:82.1px;height:27.3px;background:#fff;"></div>
<div class="t" style="left:1030.5px;top:2231.6px;width:94.5px;height:27.3px;background:#fff;"></div>
<div class="t" style="left:1135.0px;top:2231.6px;width:67.7px;height:27.3px;background:#fff;"></div>
<div class="t" style="left:1212.0px;top:2231.6px;width:87.5px;height:27.3px;background:#fff;"></div>
<div class="t" style="left:1309.0px;top:2231.6px;width:57.5px;height:27.3px;background:#fff;"></div>
<div class="t" style="left:1376.0px;top:2231.6px;width:66.5px;height:27.3px;background:#fff;"></div>
<div class="t" style="left:1448.5px;top:2231.6px;width:57.7px;height:27.3px;background:#fff;"></div>
<div class="t" style="left:1516.0px;top:2231.6px;width:66.5px;height:27.3px;background:#fff;"></div>
<div class="t" style="left:1588.5px;top:2231.6px;width:65.5px;height:27.3px;background:#fff;"></div>
<div class="t" style="left:1666.0px;top:2231.6px;width:45.0px;height:27.3px;background:#E8E4D6;box-shadow:none;border-color:#8A98A8"></div>
<div class="t" style="left:539.8px;top:2268.8px;width:37.7px;height:27.3px;background:#fff;"><span style="top:2.3px;font-size:17px;line-height:21.2px;">26</span></div>
<div class="t" style="left:586.5px;top:2269.1px;width:192.3px;height:27.3px;background:#fff;"></div>
<div class="t" style="left:788.0px;top:2268.8px;width:54.8px;height:27.3px;background:#fff;"></div>
<div class="t" style="left:852.5px;top:2265.6px;width:76.5px;height:27.3px;background:#fff;"></div>
<div class="t" style="left:939.6px;top:2265.6px;width:82.1px;height:27.3px;background:#fff;"></div>
<div class="t" style="left:1030.5px;top:2265.6px;width:94.5px;height:27.3px;background:#fff;"></div>
<div class="t" style="left:1135.0px;top:2265.6px;width:67.7px;height:27.3px;background:#fff;"></div>
<div class="t" style="left:1212.0px;top:2265.6px;width:87.5px;height:27.3px;background:#fff;"></div>
<div class="t" style="left:1309.0px;top:2265.6px;width:57.5px;height:27.3px;background:#fff;"></div>
<div class="t" style="left:1376.0px;top:2265.6px;width:66.5px;height:27.3px;background:#fff;"></div>
<div class="t" style="left:1448.5px;top:2265.6px;width:57.7px;height:27.3px;background:#fff;"></div>
<div class="t" style="left:1516.0px;top:2265.6px;width:66.5px;height:27.3px;background:#fff;"></div>
<div class="t" style="left:1588.5px;top:2265.6px;width:65.5px;height:27.3px;background:#fff;"></div>
<div class="t" style="left:1666.0px;top:2265.6px;width:45.0px;height:27.3px;background:#E8E4D6;box-shadow:none;border-color:#8A98A8"></div>
<div class="t" style="left:539.8px;top:2301.5px;width:37.7px;height:27.3px;background:#fff;"><span style="top:2.3px;font-size:17px;line-height:21.2px;">27</span></div>
<div class="t" style="left:586.5px;top:2301.8px;width:192.3px;height:27.3px;background:#fff;"></div>
<div class="t" style="left:788.0px;top:2301.5px;width:54.8px;height:27.3px;background:#fff;"></div>
<div class="t" style="left:852.5px;top:2298.3px;width:76.5px;height:27.3px;background:#fff;"></div>
<div class="t" style="left:939.6px;top:2298.3px;width:82.1px;height:27.3px;background:#fff;"></div>
<div class="t" style="left:1030.5px;top:2298.3px;width:94.5px;height:27.3px;background:#fff;"></div>
<div class="t" style="left:1135.0px;top:2298.3px;width:67.7px;height:27.3px;background:#fff;"></div>
<div class="t" style="left:1212.0px;top:2298.3px;width:87.5px;height:27.3px;background:#fff;"></div>
<div class="t" style="left:1309.0px;top:2298.3px;width:57.5px;height:27.3px;background:#fff;"></div>
<div class="t" style="left:1376.0px;top:2298.3px;width:66.5px;height:27.3px;background:#fff;"></div>
<div class="t" style="left:1448.5px;top:2298.3px;width:57.7px;height:27.3px;background:#fff;"></div>
<div class="t" style="left:1516.0px;top:2298.3px;width:66.5px;height:27.3px;background:#fff;"></div>
<div class="t" style="left:1588.5px;top:2298.3px;width:65.5px;height:27.3px;background:#fff;"></div>
<div class="t" style="left:1666.0px;top:2298.3px;width:45.0px;height:27.3px;background:#E8E4D6;box-shadow:none;border-color:#8A98A8"></div>
<div class="t" style="left:539.8px;top:2334.6px;width:37.7px;height:27.3px;background:#fff;"><span style="top:2.3px;font-size:17px;line-height:21.2px;">28</span></div>
<div class="t" style="left:586.5px;top:2334.9px;width:192.3px;height:27.3px;background:#fff;"></div>
<div class="t" style="left:788.0px;top:2334.6px;width:54.8px;height:27.3px;background:#fff;"></div>
<div class="t" style="left:852.5px;top:2331.4px;width:76.5px;height:27.3px;background:#fff;"></div>
<div class="t" style="left:939.6px;top:2331.4px;width:82.1px;height:27.3px;background:#fff;"></div>
<div class="t" style="left:1030.5px;top:2331.4px;width:94.5px;height:27.3px;background:#fff;"></div>
<div class="t" style="left:1135.0px;top:2331.4px;width:67.7px;height:27.3px;background:#fff;"></div>
<div class="t" style="left:1212.0px;top:2331.4px;width:87.5px;height:27.3px;background:#fff;"></div>
<div class="t" style="left:1309.0px;top:2331.4px;width:57.5px;height:27.3px;background:#fff;"></div>
<div class="t" style="left:1376.0px;top:2331.4px;width:66.5px;height:27.3px;background:#fff;"></div>
<div class="t" style="left:1448.5px;top:2331.4px;width:57.7px;height:27.3px;background:#fff;"></div>
<div class="t" style="left:1516.0px;top:2331.4px;width:66.5px;height:27.3px;background:#fff;"></div>
<div class="t" style="left:1588.5px;top:2331.4px;width:65.5px;height:27.3px;background:#fff;"></div>
<div class="t" style="left:1666.0px;top:2331.4px;width:45.0px;height:27.3px;background:#E8E4D6;box-shadow:none;border-color:#8A98A8"></div>
<div class="t" style="left:539.8px;top:2367.6px;width:37.7px;height:27.3px;background:#fff;"><span style="top:2.3px;font-size:17px;line-height:21.2px;">29</span></div>
<div class="t" style="left:586.5px;top:2367.9px;width:192.3px;height:27.3px;background:#fff;"></div>
<div class="t" style="left:788.0px;top:2367.6px;width:54.8px;height:27.3px;background:#fff;"></div>
<div class="t" style="left:852.5px;top:2365.1px;width:76.5px;height:27.3px;background:#fff;"></div>
<div class="t" style="left:939.6px;top:2365.1px;width:82.1px;height:27.3px;background:#fff;"></div>
<div class="t" style="left:1030.5px;top:2365.1px;width:94.5px;height:27.3px;background:#fff;"></div>
<div class="t" style="left:1135.0px;top:2365.1px;width:67.7px;height:27.3px;background:#fff;"></div>
<div class="t" style="left:1212.0px;top:2365.1px;width:87.5px;height:27.3px;background:#fff;"></div>
<div class="t" style="left:1309.0px;top:2365.1px;width:57.5px;height:27.3px;background:#fff;"></div>
<div class="t" style="left:1376.0px;top:2365.1px;width:66.5px;height:27.3px;background:#fff;"></div>
<div class="t" style="left:1448.5px;top:2365.1px;width:57.7px;height:27.3px;background:#fff;"></div>
<div class="t" style="left:1516.0px;top:2365.1px;width:66.5px;height:27.3px;background:#fff;"></div>
<div class="t" style="left:1588.5px;top:2365.1px;width:65.5px;height:27.3px;background:#fff;"></div>
<div class="t" style="left:1666.0px;top:2365.1px;width:45.0px;height:27.3px;background:#E8E4D6;box-shadow:none;border-color:#8A98A8"></div>
<div class="t" style="left:539.8px;top:2400.4px;width:37.7px;height:27.3px;background:#fff;"><span style="top:2.3px;font-size:17px;line-height:21.2px;">30</span></div>
<div class="t" style="left:586.5px;top:2400.7px;width:192.3px;height:27.3px;background:#fff;"></div>
<div class="t" style="left:788.0px;top:2400.4px;width:54.8px;height:27.3px;background:#fff;"></div>
<div class="t" style="left:852.5px;top:2398.4px;width:76.5px;height:27.3px;background:#fff;"></div>
<div class="t" style="left:939.6px;top:2398.4px;width:82.1px;height:27.3px;background:#fff;"></div>
<div class="t" style="left:1030.5px;top:2398.4px;width:94.5px;height:27.3px;background:#fff;"></div>
<div class="t" style="left:1135.0px;top:2398.4px;width:67.7px;height:27.3px;background:#fff;"></div>
<div class="t" style="left:1212.0px;top:2398.4px;width:87.5px;height:27.3px;background:#fff;"></div>
<div class="t" style="left:1309.0px;top:2398.4px;width:57.5px;height:27.3px;background:#fff;"></div>
<div class="t" style="left:1376.0px;top:2398.4px;width:66.5px;height:27.3px;background:#fff;"></div>
<div class="t" style="left:1448.5px;top:2398.4px;width:57.7px;height:27.3px;background:#fff;"></div>
<div class="t" style="left:1516.0px;top:2398.4px;width:66.5px;height:27.3px;background:#fff;"></div>
<div class="t" style="left:1588.5px;top:2398.4px;width:65.5px;height:27.3px;background:#fff;"></div>
<div class="t" style="left:1666.0px;top:2398.4px;width:45.0px;height:27.3px;background:#E8E4D6;box-shadow:none;border-color:#8A98A8"></div>
<div class="t" style="left:539.8px;top:2434.1px;width:37.7px;height:27.3px;background:#fff;"><span style="top:2.3px;font-size:17px;line-height:21.2px;">20</span></div>
<div class="t" style="left:586.5px;top:2434.1px;width:192.3px;height:27.3px;background:#fff;"><span style="top:2.3px;font-size:17px;line-height:21.2px;">Outlet</span></div>
<div class="t" style="left:788.0px;top:2434.1px;width:54.8px;height:27.3px;background:#fff;"></div>
<div class="t" style="left:852.5px;top:2434.1px;width:76.5px;height:27.3px;background:#fff;"><span style="top:2.3px;font-size:17px;line-height:21.2px;">47,7</span></div>
<div class="t" style="left:939.6px;top:2434.1px;width:82.1px;height:27.3px;background:#fff;"><span style="top:2.3px;font-size:17px;line-height:21.2px;">1,16</span></div>
<div class="t" style="left:1030.5px;top:2434.1px;width:94.5px;height:27.3px;background:#fff;"><span style="top:2.3px;font-size:17px;line-height:21.2px;">39913</span></div>
<div class="t" style="left:1135.0px;top:2431.2px;width:67.7px;height:27.3px;background:#fff;"></div>
<div class="t" style="left:1212.0px;top:2431.2px;width:87.5px;height:27.3px;background:#fff;"><span style="top:2.3px;font-size:17px;line-height:21.2px;">114,751</span></div>
<div class="t" style="left:1376.0px;top:2431.2px;width:66.5px;height:27.3px;background:#fff;"><span style="top:2.3px;font-size:17px;line-height:21.2px;">0,8987</span></div>
<div class="t" style="left:539.8px;top:2471.2px;width:37.7px;height:27.3px;background:#fff;"><span style="top:2.3px;font-size:17px;line-height:21.2px;">21</span></div>
<div class="t" style="left:586.5px;top:2471.2px;width:69.0px;height:27.3px;background:#fff;"><span style="top:2.3px;font-size:17px;line-height:21.2px;">Filter</span></div>
<div class="t" style="left:665.2px;top:2471.2px;width:54.8px;height:27.3px;background:#fff;"><span style="top:2.3px;font-size:17px;line-height:21.2px;">81,96</span></div>
<div class="l" style="left:732.5px;top:2475.3px;font-size:17px;line-height:21.2px;word-spacing:0;">m2</div>
<div class="t" style="left:852.5px;top:2471.2px;width:76.5px;height:27.3px;background:#fff;"><span style="top:2.3px;font-size:17px;line-height:21.2px;">0,4</span></div>
<div class="t" style="left:940.0px;top:2471.2px;width:81.7px;height:27.3px;background:#fff;"><span style="top:2.3px;font-size:17px;line-height:21.2px;">m/min</span></div>
<div class="t" style="left:1030.5px;top:2468.3px;width:94.5px;height:30.3px;background:#A4F02C;"><span style="top:3.8px;font-size:17px;line-height:21.2px;font-style:italic;font-size:20px;line-height:24px;top:2px">40000</span></div>
<div class="t" style="left:1135.0px;top:2468.4px;width:67.7px;height:27.3px;background:#fff;"></div>
<div class="t" style="left:1212.0px;top:2468.4px;width:87.5px;height:27.3px;background:#fff;"><span style="top:2.3px;font-size:17px;line-height:21.2px;">114,751</span></div>
<div class="t" style="left:1376.0px;top:2468.4px;width:66.5px;height:27.3px;background:#fff;"><span style="top:2.3px;font-size:17px;line-height:21.2px;">0,5693</span></div>
<div class="t" style="left:1448.5px;top:2468.4px;width:67.5px;height:27.3px;background:#fff;"><span style="top:2.3px;font-size:17px;line-height:21.2px;">87</span></div>
<div class="l" style="left:1529.8px;top:2472.5px;font-size:17px;line-height:21.2px;word-spacing:0;">mmWC</div>
<div class="b" style="left:532.6px;top:2528.5px;width:193.4px;height:35.8px;line-height:31.8px;font-size:17px;">Back to start menu</div>
<div class="b" style="left:738.0px;top:2528.5px;width:159.5px;height:35.8px;line-height:31.8px;font-size:17px;">Print calculation</div>
<div class="b" style="left:909.3px;top:2528.5px;width:174.7px;height:35.8px;line-height:31.8px;font-size:17px;">Change product</div>
<div class="b" style="left:1377.0px;top:2529.0px;width:160.6px;height:36.6px;line-height:32.6px;font-size:17px;">New Calculation</div>
<div class="b" style="left:1563.2px;top:2528.0px;width:183.4px;height:36.0px;line-height:32.0px;font-size:17px;">Calculation results</div></body></html>
